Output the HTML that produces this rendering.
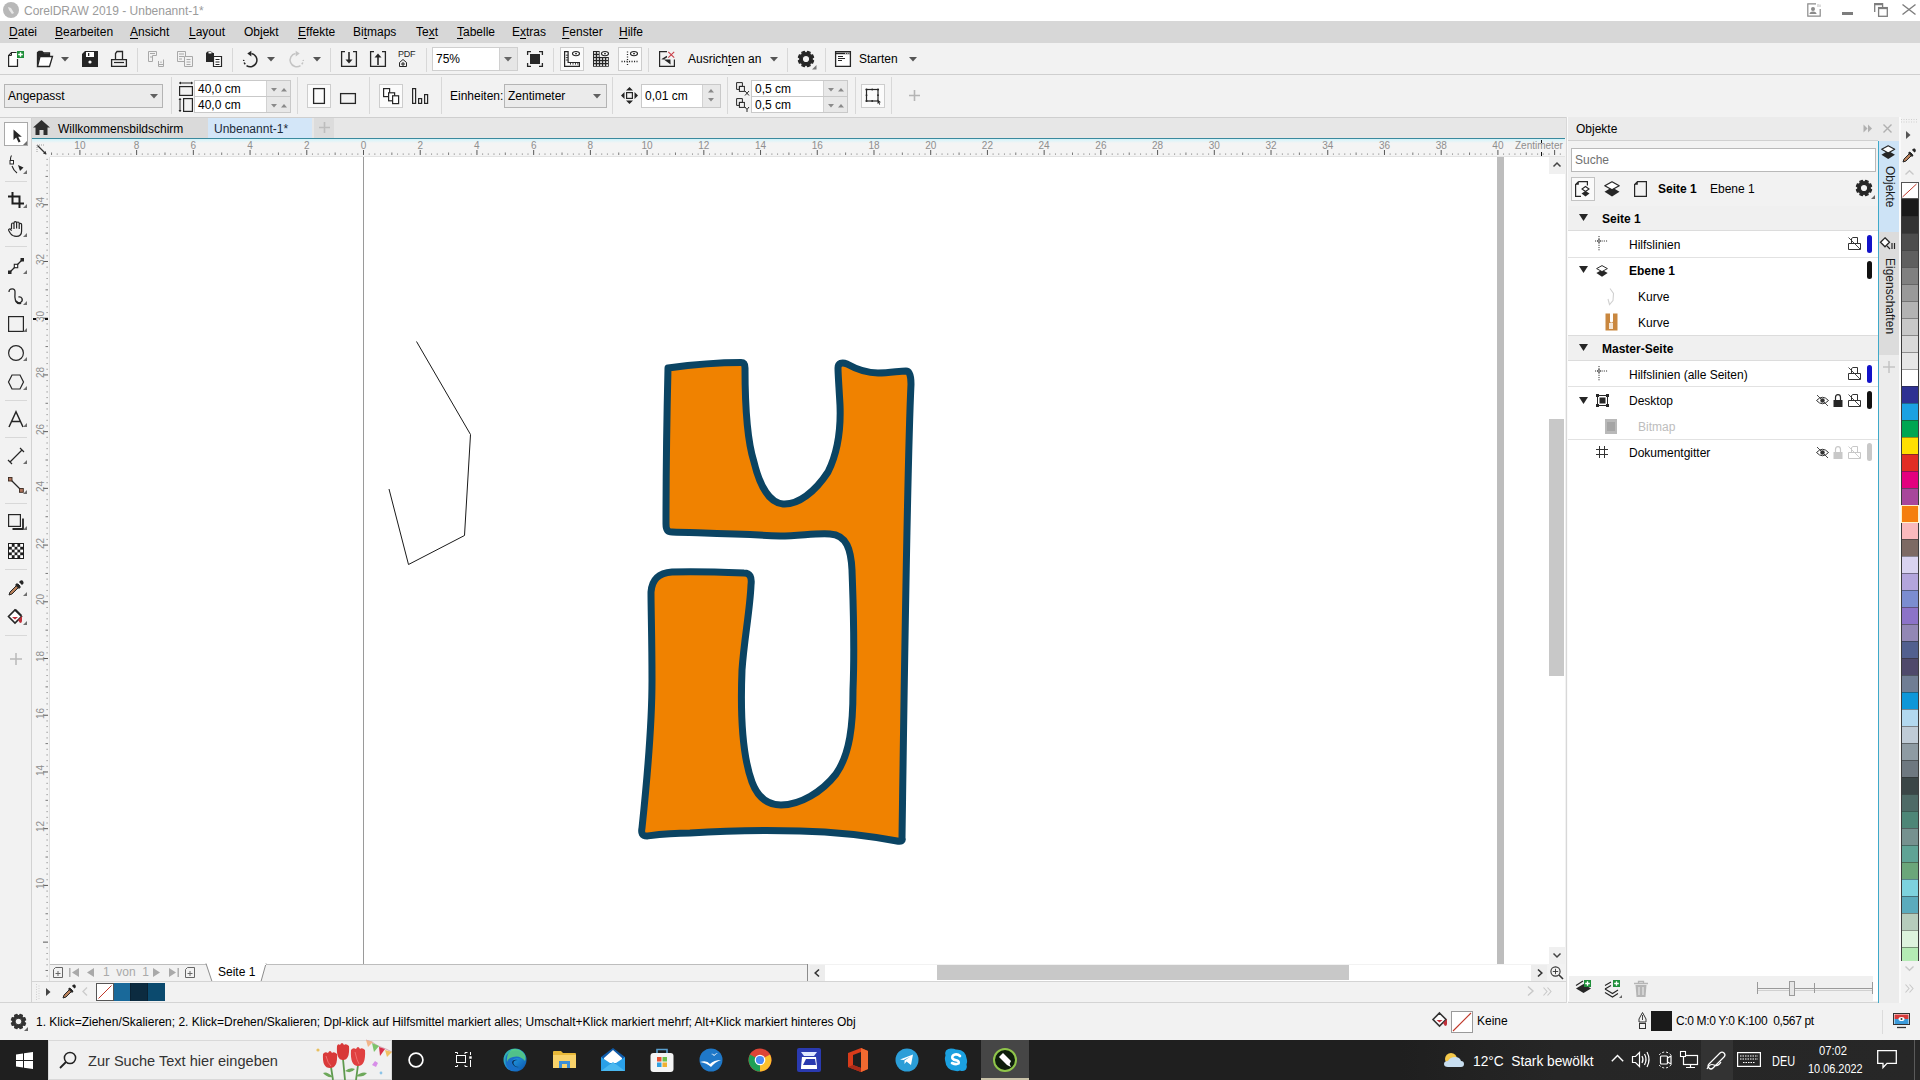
<!DOCTYPE html>
<html><head><meta charset="utf-8"><title>CorelDRAW</title>
<style>
*{margin:0;padding:0;box-sizing:border-box}
html,body{width:1920px;height:1080px;overflow:hidden}
body{position:relative;background:#f2f2f2;font-family:"Liberation Sans",sans-serif;font-size:12px;color:#000}
.a{position:absolute}
.t{position:absolute;white-space:nowrap;line-height:14px;height:14px}
svg{position:absolute;overflow:visible}
.u{text-decoration:underline;text-decoration-thickness:1px;text-underline-offset:2px}
</style></head><body>
<div class="a" style="left:0px;top:0px;width:1920px;height:21px;background:#fff"></div>
<div class="a" style="left:0px;top:21px;width:1920px;height:22px;background:#d7d7d7"></div>
<div class="a" style="left:0px;top:43px;width:1920px;height:32px;background:#f2f2f2;border-bottom:1px solid #cfcfcf"></div>
<div class="a" style="left:0px;top:75px;width:1920px;height:43px;background:#f2f2f2;border-bottom:1px solid #cfcfcf"></div>
<div class="a" style="left:0px;top:118px;width:31px;height:885px;background:#f2f2f2"></div>
<div class="a" style="left:31px;top:118px;width:1536px;height:20px;background:#e7e7e7"></div>
<div class="a" style="left:32px;top:118px;width:176px;height:20px;background:#dadada"></div>
<div class="a" style="left:208px;top:118px;width:104px;height:20px;background:#d3e6f8"></div>
<div class="a" style="left:314px;top:118px;width:20px;height:20px;background:#dcdcdc"></div>
<div class="a" style="left:32px;top:138px;width:1533px;height:1px;background:#3b8a9e"></div>
<div class="a" style="left:31px;top:140px;width:1534px;height:17px;background:#f4f4f4"></div>
<div class="a" style="left:31px;top:157px;width:19px;height:824px;background:#f4f4f4"></div>
<div class="a" style="left:50px;top:157px;width:1498px;height:807px;background:#fff"></div>
<div class="a" style="left:0px;top:1002px;width:1920px;height:38px;background:#f2f2f2;border-top:1px solid #d4d4d4"></div>
<div class="a" style="left:0px;top:1040px;width:1920px;height:40px;background:#202020"></div>
<div class="a" style="left:3px;top:2px;width:16px;height:16px;background:#b8b8b8;border-radius:50%"></div>
<svg style="left:6px;top:5px" width="10" height="10" viewBox="0 0 10 10"><path d="M2 2L5 3L8 8L6 9L3 5Z" fill="#e6e6e6"/></svg>
<div class="t" style="left:24px;top:4px;color:#9b9b9b">CorelDRAW 2019 - Unbenannt-1*</div>
<div class="t" style="left:9px;top:25px;color:#000"><span class="u">D</span>atei</div>
<div class="t" style="left:55px;top:25px;color:#000"><span class="u">B</span>earbeiten</div>
<div class="t" style="left:130px;top:25px;color:#000"><span class="u">A</span>nsicht</div>
<div class="t" style="left:189px;top:25px;color:#000"><span class="u">L</span>ayout</div>
<div class="t" style="left:244px;top:25px;color:#000">Ob<span class="u">j</span>ekt</div>
<div class="t" style="left:298px;top:25px;color:#000"><span class="u">E</span>ffekte</div>
<div class="t" style="left:353px;top:25px;color:#000">Bi<span class="u">t</span>maps</div>
<div class="t" style="left:416px;top:25px;color:#000">Te<span class="u">x</span>t</div>
<div class="t" style="left:457px;top:25px;color:#000"><span class="u">T</span>abelle</div>
<div class="t" style="left:512px;top:25px;color:#000">E<span class="u">x</span>tras</div>
<div class="t" style="left:562px;top:25px;color:#000"><span class="u">F</span>enster</div>
<div class="t" style="left:619px;top:25px;color:#000"><span class="u">H</span>ilfe</div>
<svg style="left:1807px;top:3px" width="15" height="14" viewBox="0 0 15 14"><path d="M9 0.8H0.8V13.2H13.2V6" fill="none" stroke="#8a8a8a" stroke-width="1.2"/><circle cx="6" cy="6" r="2" fill="#8a8a8a"/><path d="M2.5 11Q2.5 8.5 6 8.5Q9.5 8.5 9.5 11Z" fill="#8a8a8a"/><path d="M11 1V4M13 1.5V4" stroke="#aaa" stroke-width="0.8"/></svg>
<div class="a" style="left:1842px;top:12px;width:11px;height:3px;background:#7d7d7d"></div>
<svg style="left:1874px;top:3px" width="14" height="14" viewBox="0 0 14 14"><path d="M0.7 9V0.7H8.6V4" fill="none" stroke="#7d7d7d" stroke-width="1.3"/><path d="M0.7 1.5H8.6" stroke="#7d7d7d" stroke-width="1.5"/><rect x="4.6" y="4.6" width="8.7" height="8.7" fill="#fff" stroke="#7d7d7d" stroke-width="1.3"/><path d="M4.6 5.4H13.3" stroke="#7d7d7d" stroke-width="1.5"/></svg>
<svg style="left:1902px;top:4px" width="14" height="11" viewBox="0 0 14 11"><path d="M0.5 0.5L13.5 10.5M13.5 0.5L0.5 10.5" stroke="#7d7d7d" stroke-width="1.4"/></svg>
<svg style="left:8px;top:51px;" width="17" height="16" viewBox="0 0 17 16"><path d="M8.5 1.5H3.5L0.6 4.5V15.4H9.5V8" fill="#fff" stroke="#262626" stroke-width="1.2"/><path d="M0.5 4.5H3.5V1.5" fill="none" stroke="#262626" stroke-width="1"/><rect x="9" y="0" width="7" height="7" fill="#1f8f3a"/><path d="M12.5 1.2V5.8M10.2 3.5H14.8" stroke="#fff" stroke-width="1.4"/></svg>
<svg style="left:37px;top:51px;" width="16" height="16" viewBox="0 0 16 16"><path d="M0.5 15.5V1.5L2 0.5H5L6.5 2H12.5V5" fill="none" stroke="#262626" stroke-width="1.3"/><path d="M0 1H6L7 2.5H13V5H3L0 15.5Z" fill="#262626"/><path d="M3 5.5H15.5L12.5 15.5H0.5Z" fill="#fff" stroke="#262626" stroke-width="1.3"/></svg>
<svg style="left:61px;top:57px;" width="8" height="5" viewBox="0 0 8 5"><path d="M0 0H8L4 4.5Z" fill="#555"/></svg>
<svg style="left:82px;top:51px;" width="16" height="16" viewBox="0 0 16 16"><path d="M0 3L3 0H16V16H0Z" fill="#262626"/><rect x="4" y="1" width="8" height="5" fill="#fff"/><rect x="6" y="2" width="1.3" height="3" fill="#262626"/><circle cx="8" cy="11" r="1.6" fill="#fff"/></svg>
<svg style="left:111px;top:51px;" width="16" height="16" viewBox="0 0 16 16"><path d="M4.5 8.5V2.5L6 0.5H11.5V8.5" fill="none" stroke="#262626" stroke-width="1.3"/><path d="M0.6 8.6H15.4V15.4H0.6Z" fill="none" stroke="#262626" stroke-width="1.3"/><path d="M3 11.5H13" stroke="#262626" stroke-width="1.2"/></svg>
<div class="a" style="left:137px;top:48px;width:1px;height:24px;background:#d8d8d8"></div>
<svg style="left:148px;top:51px;" width="16" height="16" viewBox="0 0 16 16"><path d="M0.5 0.5H8.5V4.5H4.5V10.5H0.5Z" fill="none" stroke="#a8a8a8"/><path d="M2 2.5H7M2 6H4" stroke="#a8a8a8"/><path d="M10.5 10V15.5H15.5V8.5" fill="none" stroke="#a8a8a8"/><path d="M11 13.5H15M13 10.5V12" stroke="#a8a8a8"/></svg>
<svg style="left:177px;top:51px;" width="16" height="16" viewBox="0 0 16 16"><path d="M0.5 0.5H8.5V10.5H0.5Z" fill="none" stroke="#a8a8a8"/><path d="M2 3H7M2 5.5H7M2 8H5" stroke="#a8a8a8"/><path d="M7.5 5.5H15.5V15.5H7.5Z" fill="#f2f2f2" stroke="#a8a8a8"/><path d="M9.5 8.5H13.5M9.5 11H13.5M9.5 13.5H13.5" stroke="#a8a8a8"/></svg>
<svg style="left:206px;top:51px;" width="16" height="16" viewBox="0 0 16 16"><path d="M0 2L1.5 0.5H5L7 2H8V11H0Z" fill="#262626"/><rect x="2.5" y="1" width="3" height="1.5" fill="#fff"/><path d="M7.5 5.5H15.5V15.5H7.5Z" fill="#fff" stroke="#262626" stroke-width="1.2"/><path d="M9.5 8.5H13.5M9.5 11H13.5M9.5 13.5H13.5" stroke="#262626" stroke-width="1.1"/></svg>
<div class="a" style="left:232px;top:48px;width:1px;height:24px;background:#d8d8d8"></div>
<svg style="left:243px;top:51px;" width="16" height="16" viewBox="0 0 16 16"><path d="M8.45 2.60A6.6 6.6 0 1 1 3.51 14.51M2.24 13.34A6.6 6.6 0 0 1 1.18 11.57M0.76 10.02A6.6 6.6 0 0 1 0.70 8.87" fill="none" stroke="#262626" stroke-width="1.5"/><path d="M4.3 2.6L8.3 -0.2V5.6Z" fill="#262626"/></svg>
<svg style="left:267px;top:57px;" width="8" height="5" viewBox="0 0 8 5"><path d="M0 0H8L4 4.5Z" fill="#555"/></svg>
<svg style="left:288px;top:51px;" width="16" height="16" viewBox="0 0 16 16"><path d="M7.55 2.60A6.6 6.6 0 1 0 12.49 14.51M13.76 13.34A6.6 6.6 0 0 0 14.82 11.57M15.24 10.02A6.6 6.6 0 0 0 15.30 8.87" fill="none" stroke="#c4c4c4" stroke-width="1.5"/><path d="M11.7 2.6L7.7 -0.2V5.6Z" fill="#c4c4c4"/></svg>
<svg style="left:313px;top:57px;" width="8" height="5" viewBox="0 0 8 5"><path d="M0 0H8L4 4.5Z" fill="#555"/></svg>
<div class="a" style="left:330px;top:48px;width:1px;height:24px;background:#d8d8d8"></div>
<svg style="left:341px;top:51px;" width="16" height="16" viewBox="0 0 16 16"><path d="M4 0.6H0.6V15.4H15.4V0.6H12" fill="none" stroke="#262626" stroke-width="1.3"/><path d="M8 1V10" stroke="#262626" stroke-width="1.6"/><path d="M4.5 8.5H11.5L8 12.5Z" fill="#262626"/></svg>
<svg style="left:370px;top:51px;" width="16" height="16" viewBox="0 0 16 16"><path d="M4 0.6H0.6V15.4H15.4V0.6H12" fill="none" stroke="#262626" stroke-width="1.3"/><path d="M8 5V14" stroke="#262626" stroke-width="1.6"/><path d="M4.5 6.5H11.5L8 2.5Z" fill="#262626"/></svg>
<div class="a" style="left:398px;top:50px;font-size:9px;line-height:9px;color:#262626;letter-spacing:-0.2px">PDF</div>
<svg style="left:399px;top:59px;" width="8" height="8" viewBox="0 0 8 8"><path d="M0.5 3.5L4 0.5L7.5 3.5V7.5H0.5Z" fill="none" stroke="#262626" stroke-width="1"/><path d="M2 5H6M4 3V7" stroke="#262626" stroke-width="1"/></svg>
<div class="a" style="left:426px;top:48px;width:1px;height:24px;background:#d8d8d8"></div>
<div class="a" style="left:432px;top:47px;width:86px;height:24px;background:#fff;border:1px solid #cfcfcf"></div>
<div class="a" style="left:499px;top:48px;width:18px;height:22px;background:#e6e6e6;border-left:1px solid #d0d0d0"></div>
<svg style="left:504px;top:57px;" width="8" height="5" viewBox="0 0 8 5"><path d="M0 0H8L4 4.5Z" fill="#666"/></svg>
<div class="t" style="left:436px;top:52px;">75%</div>
<svg style="left:527px;top:51px;" width="16" height="16" viewBox="0 0 16 16"><path d="M0.6 4V0.6H4M12 0.6H15.4V4M15.4 12V15.4H12M4 15.4H0.6V12" fill="none" stroke="#262626" stroke-width="1.3"/><rect x="3" y="3" width="10" height="10" fill="#262626"/></svg>
<div class="a" style="left:553px;top:48px;width:1px;height:24px;background:#d8d8d8"></div>
<div class="a" style="left:560px;top:47px;width:24px;height:24px;background:#fbfbfb;border:1px solid #cdcdcd"></div>
<svg style="left:564px;top:51px;" width="16" height="16" viewBox="0 0 16 16"><path d="M0.6 0.6H4.1V11.5H15.4V15.4H0.6Z" fill="none" stroke="#262626" stroke-width="1.2"/><path d="M1.8 4.2H4M1.8 6.6H4M1.8 9H4M6.5 11.6V13.6M9 11.6V13.6M11.5 11.6V13.6M13.8 11.6V13.6" stroke="#262626" stroke-width="0.9"/><ellipse cx="12" cy="2.6" rx="3.5" ry="2.1" fill="#fff" stroke="#262626" stroke-width="1.1"/><circle cx="12" cy="2.6" r="0.95" fill="#262626"/></svg>
<svg style="left:593px;top:51px;" width="16" height="16" viewBox="0 0 16 16"><path d="M0 0H6.6V6.1H15.8V15.8H0Z" fill="#262626"/><rect x="1.05" y="1.05" width="1.75" height="1.75" fill="#f2f2f2"/><rect x="1.05" y="4.10" width="1.75" height="1.75" fill="#f2f2f2"/><rect x="1.05" y="7.15" width="1.75" height="1.75" fill="#f2f2f2"/><rect x="1.05" y="10.20" width="1.75" height="1.75" fill="#f2f2f2"/><rect x="1.05" y="13.25" width="1.75" height="1.75" fill="#f2f2f2"/><rect x="4.10" y="1.05" width="1.75" height="1.75" fill="#f2f2f2"/><rect x="4.10" y="4.10" width="1.75" height="1.75" fill="#f2f2f2"/><rect x="4.10" y="7.15" width="1.75" height="1.75" fill="#f2f2f2"/><rect x="4.10" y="10.20" width="1.75" height="1.75" fill="#f2f2f2"/><rect x="4.10" y="13.25" width="1.75" height="1.75" fill="#f2f2f2"/><rect x="7.15" y="7.15" width="1.75" height="1.75" fill="#f2f2f2"/><rect x="7.15" y="10.20" width="1.75" height="1.75" fill="#f2f2f2"/><rect x="7.15" y="13.25" width="1.75" height="1.75" fill="#f2f2f2"/><rect x="10.20" y="7.15" width="1.75" height="1.75" fill="#f2f2f2"/><rect x="10.20" y="10.20" width="1.75" height="1.75" fill="#f2f2f2"/><rect x="10.20" y="13.25" width="1.75" height="1.75" fill="#f2f2f2"/><rect x="13.25" y="7.15" width="1.75" height="1.75" fill="#f2f2f2"/><rect x="13.25" y="10.20" width="1.75" height="1.75" fill="#f2f2f2"/><rect x="13.25" y="13.25" width="1.75" height="1.75" fill="#f2f2f2"/><ellipse cx="12" cy="2.6" rx="3.5" ry="2.1" fill="#fff" stroke="#262626" stroke-width="1.1"/><circle cx="12" cy="2.6" r="0.95" fill="#262626"/></svg>
<div class="a" style="left:618px;top:47px;width:24px;height:24px;background:#fbfbfb;border:1px solid #cdcdcd"></div>
<svg style="left:621px;top:51px;" width="17" height="16" viewBox="0 0 17 16"><path d="M6.5 0.5V15.5M0.5 10.5H16.5" stroke="#262626" stroke-width="1.3" stroke-dasharray="1.1 1.4"/><ellipse cx="13" cy="2.6" rx="3.5" ry="2.1" fill="#fff" stroke="#262626" stroke-width="1.1"/><circle cx="13" cy="2.6" r="0.95" fill="#262626"/></svg>
<div class="a" style="left:648px;top:48px;width:1px;height:24px;background:#d8d8d8"></div>
<svg style="left:659px;top:51px;" width="17" height="16" viewBox="0 0 17 16"><path d="M8 0.6H0.6V15.4H15.4V8.5" fill="none" stroke="#262626" stroke-width="1.2"/><path d="M9.3 0.8L15.2 6.6M15.2 0.8L9.3 6.6" stroke="#c8404a" stroke-width="1.1"/><path d="M2.2 8.3L7.8 4.8L8.2 6.3L4.8 8.4L11.6 13.4L11.4 8.5H8.5Z" fill="#262626"/></svg>
<div class="t" style="left:688px;top:52px;">Ausrich<span class="u">t</span>en an</div>
<svg style="left:770px;top:57px;" width="8" height="5" viewBox="0 0 8 5"><path d="M0 0H8L4 4.5Z" fill="#555"/></svg>
<div class="a" style="left:787px;top:48px;width:1px;height:24px;background:#d8d8d8"></div>
<svg style="left:797px;top:50px;" width="20" height="20" viewBox="0 0 20 20"><path d="M15.15 9.81 L16.62 10.69 L15.58 13.19 L13.92 12.77 L12.77 13.92 L13.19 15.58 L10.69 16.62 L9.81 15.15 L8.19 15.15 L7.31 16.62 L4.81 15.58 L5.23 13.92 L4.08 12.77 L2.42 13.19 L1.38 10.69 L2.85 9.81 L2.85 8.19 L1.38 7.31 L2.42 4.81 L4.08 5.23 L5.23 4.08 L4.81 2.42 L7.31 1.38 L8.19 2.85 L9.81 2.85 L10.69 1.38 L13.19 2.42 L12.77 4.08 L13.92 5.23 L15.58 4.81 L16.62 7.31 L15.15 8.19Z M12.70 9.00 A3.7 3.7 0 1 0 5.30 9.00 A3.7 3.7 0 1 0 12.70 9.00Z" fill="#262626" stroke="#262626" stroke-width="1.2" stroke-linejoin="round" fill-rule="evenodd"/><path d="M19.5 15V19.5H15Z" fill="#777"/></svg>
<div class="a" style="left:825px;top:48px;width:1px;height:24px;background:#d8d8d8"></div>
<svg style="left:835px;top:51px;" width="17" height="16" viewBox="0 0 17 16"><path d="M0.6 0.6H15.4V15.4H0.6Z" fill="#fff" stroke="#262626" stroke-width="1.3"/><path d="M0.6 2.4H15.4" stroke="#262626" stroke-width="1.6"/><path d="M10 2.4H15" stroke="#fff" stroke-width="0.8" stroke-dasharray="1 0.8"/><path d="M3 5.5H8M3 7.5H10M3 9.5H7" stroke="#262626" stroke-width="1"/></svg>
<div class="t" style="left:859px;top:52px;">Starten</div>
<svg style="left:909px;top:57px;" width="8" height="5" viewBox="0 0 8 5"><path d="M0 0H8L4 4.5Z" fill="#555"/></svg>
<div class="a" style="left:4px;top:84px;width:159px;height:24px;background:#ebebeb;border:1px solid #b4b4b4"></div>
<div class="t" style="left:8px;top:89px;">Angepasst</div>
<svg style="left:150px;top:94px;" width="8" height="5" viewBox="0 0 8 5"><path d="M0 0H8L4 4.5Z" fill="#606060"/></svg>
<div class="a" style="left:171px;top:77px;width:1px;height:37px;background:#d8d8d8"></div>
<svg style="left:179px;top:82px;" width="14" height="14" viewBox="0 0 14 14"><path d="M0.5 1H13.5" stroke="#262626" stroke-width="1"/><path d="M0 1L2 -0.5V2.5Z M14 1L12 -0.5V2.5Z" fill="#262626"/><rect x="0.6" y="4.6" width="12.8" height="8.8" fill="none" stroke="#262626" stroke-width="1.2"/></svg>
<svg style="left:179px;top:98px;" width="14" height="14" viewBox="0 0 14 14"><path d="M1 0.5V13.5" stroke="#262626" stroke-width="1"/><path d="M1 0L-0.5 2H2.5Z M1 14L-0.5 12H2.5Z" fill="#262626"/><rect x="4.6" y="0.6" width="8.8" height="12.8" fill="none" stroke="#262626" stroke-width="1.2"/></svg>
<div class="a" style="left:194px;top:80px;width:97px;height:17px;background:#fff;border:1px solid #c9c9c9"></div>
<div class="a" style="left:266px;top:81px;width:24px;height:15px;background:#e8e8e8;border-left:1px solid #d2d2d2"></div>
<div class="a" style="left:194px;top:96px;width:97px;height:17px;background:#fff;border:1px solid #c9c9c9"></div>
<div class="a" style="left:266px;top:97px;width:24px;height:15px;background:#e8e8e8;border-left:1px solid #d2d2d2"></div>
<svg style="left:271px;top:88px;" width="6" height="4" viewBox="0 0 6 4"><path d="M0 0H6L3 3.5Z" fill="#8a8a8a"/></svg>
<svg style="left:281px;top:88px;" width="6" height="4" viewBox="0 0 6 4"><path d="M0 3.5H6L3 0Z" fill="#8a8a8a"/></svg>
<svg style="left:271px;top:104px;" width="6" height="4" viewBox="0 0 6 4"><path d="M0 0H6L3 3.5Z" fill="#8a8a8a"/></svg>
<svg style="left:281px;top:104px;" width="6" height="4" viewBox="0 0 6 4"><path d="M0 3.5H6L3 0Z" fill="#8a8a8a"/></svg>
<div class="t" style="left:198px;top:82px;">40,0 cm</div>
<div class="t" style="left:198px;top:98px;">40,0 cm</div>
<div class="a" style="left:297px;top:77px;width:1px;height:37px;background:#d8d8d8"></div>
<div class="a" style="left:307px;top:84px;width:24px;height:24px;background:#fbfbfb;border:1px solid #cdcdcd"></div>
<svg style="left:313px;top:88px;" width="12" height="16" viewBox="0 0 12 16"><rect x="0.6" y="0.6" width="10.8" height="14.8" fill="none" stroke="#262626" stroke-width="1.3"/></svg>
<svg style="left:340px;top:93px;" width="16" height="11" viewBox="0 0 16 11"><rect x="0.6" y="0.6" width="14.8" height="9.8" fill="none" stroke="#262626" stroke-width="1.3"/></svg>
<div class="a" style="left:369px;top:77px;width:1px;height:37px;background:#d8d8d8"></div>
<div class="a" style="left:379px;top:84px;width:24px;height:24px;background:#fbfbfb;border:1px solid #cdcdcd"></div>
<svg style="left:383px;top:88px;" width="16" height="16" viewBox="0 0 16 16"><rect x="0.6" y="0.6" width="6" height="8" fill="#fff" stroke="#262626" stroke-width="1.2"/><rect x="5.6" y="4.8" width="6" height="8" fill="#fff" stroke="#262626" stroke-width="1.2"/><rect x="9.6" y="7.8" width="6" height="7.8" fill="#fff" stroke="#262626" stroke-width="1.2"/></svg>
<svg style="left:412px;top:88px;" width="16" height="16" viewBox="0 0 16 16"><rect x="0.6" y="0.6" width="3" height="14.8" fill="none" stroke="#262626" stroke-width="1.2"/><rect x="6.6" y="10.6" width="3" height="4.8" fill="none" stroke="#262626" stroke-width="1.2"/><rect x="12.6" y="6.6" width="3" height="8.8" fill="none" stroke="#262626" stroke-width="1.2"/></svg>
<div class="a" style="left:441px;top:77px;width:1px;height:37px;background:#d8d8d8"></div>
<div class="t" style="left:450px;top:89px;">Einheiten:</div>
<div class="a" style="left:504px;top:84px;width:103px;height:24px;background:#ebebeb;border:1px solid #b4b4b4"></div>
<div class="t" style="left:508px;top:89px;">Zentimeter</div>
<svg style="left:593px;top:94px;" width="8" height="5" viewBox="0 0 8 5"><path d="M0 0H8L4 4.5Z" fill="#606060"/></svg>
<div class="a" style="left:612px;top:77px;width:1px;height:37px;background:#d8d8d8"></div>
<svg style="left:621px;top:87px;" width="17" height="17" viewBox="0 0 17 17"><path d="M8.5 0L12 3.5H5Z M8.5 17L12 13.5H5Z M0 8.5L3.5 5V12Z M17 8.5L13.5 5V12Z" fill="#262626"/><rect x="5.6" y="5.6" width="5.8" height="5.8" fill="none" stroke="#262626" stroke-width="1.2"/></svg>
<div class="a" style="left:641px;top:84px;width:80px;height:24px;background:#fff;border:1px solid #c9c9c9"></div>
<div class="a" style="left:702px;top:85px;width:18px;height:22px;background:#e8e8e8;border-left:1px solid #d2d2d2"></div>
<svg style="left:708px;top:89px;" width="6" height="4" viewBox="0 0 6 4"><path d="M0 3.5H6L3 0Z" fill="#8a8a8a"/></svg>
<svg style="left:708px;top:98px;" width="6" height="4" viewBox="0 0 6 4"><path d="M0 0H6L3 3.5Z" fill="#8a8a8a"/></svg>
<div class="t" style="left:645px;top:89px;">0,01 cm</div>
<div class="a" style="left:727px;top:77px;width:1px;height:37px;background:#d8d8d8"></div>
<svg style="left:736px;top:82px;" width="14" height="14" viewBox="0 0 14 14"><path d="M0.6 0.6H6.4V4.4H3.4V7.4H0.6Z" fill="none" stroke="#262626" stroke-width="1"/><rect x="3.4" y="4.4" width="5" height="5" fill="none" stroke="#262626" stroke-width="1"/><path d="M9 9L13 13.5M13 9L9 13.5" stroke="#262626" stroke-width="1"/></svg>
<svg style="left:736px;top:98px;" width="14" height="14" viewBox="0 0 14 14"><path d="M0.6 0.6H6.4V4.4H3.4V7.4H0.6Z" fill="none" stroke="#262626" stroke-width="1"/><rect x="3.4" y="4.4" width="5" height="5" fill="none" stroke="#262626" stroke-width="1"/><path d="M9 9L11 11.5L13 9M11 11.5V14" fill="none" stroke="#262626" stroke-width="1"/></svg>
<div class="a" style="left:751px;top:80px;width:97px;height:17px;background:#fff;border:1px solid #c9c9c9"></div>
<div class="a" style="left:823px;top:81px;width:24px;height:15px;background:#e8e8e8;border-left:1px solid #d2d2d2"></div>
<div class="a" style="left:751px;top:96px;width:97px;height:17px;background:#fff;border:1px solid #c9c9c9"></div>
<div class="a" style="left:823px;top:97px;width:24px;height:15px;background:#e8e8e8;border-left:1px solid #d2d2d2"></div>
<svg style="left:828px;top:88px;" width="6" height="4" viewBox="0 0 6 4"><path d="M0 0H6L3 3.5Z" fill="#8a8a8a"/></svg>
<svg style="left:838px;top:88px;" width="6" height="4" viewBox="0 0 6 4"><path d="M0 3.5H6L3 0Z" fill="#8a8a8a"/></svg>
<svg style="left:828px;top:104px;" width="6" height="4" viewBox="0 0 6 4"><path d="M0 0H6L3 3.5Z" fill="#8a8a8a"/></svg>
<svg style="left:838px;top:104px;" width="6" height="4" viewBox="0 0 6 4"><path d="M0 3.5H6L3 0Z" fill="#8a8a8a"/></svg>
<div class="t" style="left:755px;top:82px;">0,5 cm</div>
<div class="t" style="left:755px;top:98px;">0,5 cm</div>
<div class="a" style="left:855px;top:77px;width:1px;height:37px;background:#d8d8d8"></div>
<div class="a" style="left:861px;top:84px;width:24px;height:24px;background:#fbfbfb;border:1px solid #cdcdcd"></div>
<svg style="left:865px;top:88px;" width="17" height="17" viewBox="0 0 17 17"><rect x="1.5" y="1.5" width="11.5" height="11.5" fill="none" stroke="#262626" stroke-width="1.2"/><g fill="#262626"><circle cx="1.5" cy="1.5" r="1.1"/><circle cx="13" cy="1.5" r="1.1"/><circle cx="1.5" cy="13" r="1.1"/><circle cx="7.2" cy="1.5" r="0.9"/><circle cx="7.2" cy="13" r="0.9"/><circle cx="1.5" cy="7.2" r="0.9"/><circle cx="13" cy="7.2" r="0.9"/></g><path d="M12.5 11.5L16 14.2L14.3 14.6L15.2 16.5L14.4 16.8L13.5 15L12.5 16Z" fill="#262626"/></svg>
<div class="a" style="left:891px;top:77px;width:1px;height:37px;background:#d8d8d8"></div>
<svg style="left:909px;top:90px;" width="11" height="11" viewBox="0 0 11 11"><path d="M5.5 0V11M0 5.5H11" stroke="#b5b5b5" stroke-width="1.6"/></svg>
<svg style="left:33px;top:120px;" width="17" height="15" viewBox="0 0 17 15"><path d="M8.5 0L17 7.5H14.5V15H10.5V10H6.5V15H2.5V7.5H0Z" fill="#2f2f2f"/></svg>
<div class="t" style="left:58px;top:122px;">Willkommensbildschirm</div>
<div class="t" style="left:214px;top:122px;color:#1b2a3a">Unbenannt-1*</div>
<svg style="left:319px;top:122px;" width="11" height="11" viewBox="0 0 11 11"><path d="M5.5 0V11M0 5.5H11" stroke="#bdbdbd" stroke-width="1.6"/></svg>
<div class="a" style="left:31px;top:139px;width:1534px;height:4px;background:linear-gradient(#d2f4fb,#f4f4f4)"></div>
<svg style="left:0;top:0" width="1920" height="1080" viewBox="0 0 1920 1080"><rect x="51.04" y="152.5" width="1" height="2.5" fill="#7a7a7a"/><rect x="56.71" y="153.5" width="1" height="1.2" fill="#8a8a8a"/><rect x="62.38" y="153.5" width="1" height="1.2" fill="#8a8a8a"/><rect x="68.06" y="153.5" width="1" height="1.2" fill="#8a8a8a"/><rect x="73.73" y="153.5" width="1" height="1.2" fill="#8a8a8a"/><rect x="79.40" y="150" width="1" height="5" fill="#585858"/><rect x="85.07" y="153.5" width="1" height="1.2" fill="#8a8a8a"/><rect x="90.74" y="153.5" width="1" height="1.2" fill="#8a8a8a"/><rect x="96.42" y="153.5" width="1" height="1.2" fill="#8a8a8a"/><rect x="102.09" y="153.5" width="1" height="1.2" fill="#8a8a8a"/><rect x="107.76" y="152.5" width="1" height="2.5" fill="#7a7a7a"/><rect x="113.43" y="153.5" width="1" height="1.2" fill="#8a8a8a"/><rect x="119.10" y="153.5" width="1" height="1.2" fill="#8a8a8a"/><rect x="124.78" y="153.5" width="1" height="1.2" fill="#8a8a8a"/><rect x="130.45" y="153.5" width="1" height="1.2" fill="#8a8a8a"/><rect x="136.12" y="150" width="1" height="5" fill="#585858"/><rect x="141.79" y="153.5" width="1" height="1.2" fill="#8a8a8a"/><rect x="147.46" y="153.5" width="1" height="1.2" fill="#8a8a8a"/><rect x="153.14" y="153.5" width="1" height="1.2" fill="#8a8a8a"/><rect x="158.81" y="153.5" width="1" height="1.2" fill="#8a8a8a"/><rect x="164.48" y="152.5" width="1" height="2.5" fill="#7a7a7a"/><rect x="170.15" y="153.5" width="1" height="1.2" fill="#8a8a8a"/><rect x="175.82" y="153.5" width="1" height="1.2" fill="#8a8a8a"/><rect x="181.50" y="153.5" width="1" height="1.2" fill="#8a8a8a"/><rect x="187.17" y="153.5" width="1" height="1.2" fill="#8a8a8a"/><rect x="192.84" y="150" width="1" height="5" fill="#585858"/><rect x="198.51" y="153.5" width="1" height="1.2" fill="#8a8a8a"/><rect x="204.18" y="153.5" width="1" height="1.2" fill="#8a8a8a"/><rect x="209.86" y="153.5" width="1" height="1.2" fill="#8a8a8a"/><rect x="215.53" y="153.5" width="1" height="1.2" fill="#8a8a8a"/><rect x="221.20" y="152.5" width="1" height="2.5" fill="#7a7a7a"/><rect x="226.87" y="153.5" width="1" height="1.2" fill="#8a8a8a"/><rect x="232.54" y="153.5" width="1" height="1.2" fill="#8a8a8a"/><rect x="238.22" y="153.5" width="1" height="1.2" fill="#8a8a8a"/><rect x="243.89" y="153.5" width="1" height="1.2" fill="#8a8a8a"/><rect x="249.56" y="150" width="1" height="5" fill="#585858"/><rect x="255.23" y="153.5" width="1" height="1.2" fill="#8a8a8a"/><rect x="260.90" y="153.5" width="1" height="1.2" fill="#8a8a8a"/><rect x="266.58" y="153.5" width="1" height="1.2" fill="#8a8a8a"/><rect x="272.25" y="153.5" width="1" height="1.2" fill="#8a8a8a"/><rect x="277.92" y="152.5" width="1" height="2.5" fill="#7a7a7a"/><rect x="283.59" y="153.5" width="1" height="1.2" fill="#8a8a8a"/><rect x="289.26" y="153.5" width="1" height="1.2" fill="#8a8a8a"/><rect x="294.94" y="153.5" width="1" height="1.2" fill="#8a8a8a"/><rect x="300.61" y="153.5" width="1" height="1.2" fill="#8a8a8a"/><rect x="306.28" y="150" width="1" height="5" fill="#585858"/><rect x="311.95" y="153.5" width="1" height="1.2" fill="#8a8a8a"/><rect x="317.62" y="153.5" width="1" height="1.2" fill="#8a8a8a"/><rect x="323.30" y="153.5" width="1" height="1.2" fill="#8a8a8a"/><rect x="328.97" y="153.5" width="1" height="1.2" fill="#8a8a8a"/><rect x="334.64" y="152.5" width="1" height="2.5" fill="#7a7a7a"/><rect x="340.31" y="153.5" width="1" height="1.2" fill="#8a8a8a"/><rect x="345.98" y="153.5" width="1" height="1.2" fill="#8a8a8a"/><rect x="351.66" y="153.5" width="1" height="1.2" fill="#8a8a8a"/><rect x="357.33" y="153.5" width="1" height="1.2" fill="#8a8a8a"/><rect x="363.00" y="150" width="1" height="5" fill="#585858"/><rect x="368.67" y="153.5" width="1" height="1.2" fill="#8a8a8a"/><rect x="374.34" y="153.5" width="1" height="1.2" fill="#8a8a8a"/><rect x="380.02" y="153.5" width="1" height="1.2" fill="#8a8a8a"/><rect x="385.69" y="153.5" width="1" height="1.2" fill="#8a8a8a"/><rect x="391.36" y="152.5" width="1" height="2.5" fill="#7a7a7a"/><rect x="397.03" y="153.5" width="1" height="1.2" fill="#8a8a8a"/><rect x="402.70" y="153.5" width="1" height="1.2" fill="#8a8a8a"/><rect x="408.38" y="153.5" width="1" height="1.2" fill="#8a8a8a"/><rect x="414.05" y="153.5" width="1" height="1.2" fill="#8a8a8a"/><rect x="419.72" y="150" width="1" height="5" fill="#585858"/><rect x="425.39" y="153.5" width="1" height="1.2" fill="#8a8a8a"/><rect x="431.06" y="153.5" width="1" height="1.2" fill="#8a8a8a"/><rect x="436.74" y="153.5" width="1" height="1.2" fill="#8a8a8a"/><rect x="442.41" y="153.5" width="1" height="1.2" fill="#8a8a8a"/><rect x="448.08" y="152.5" width="1" height="2.5" fill="#7a7a7a"/><rect x="453.75" y="153.5" width="1" height="1.2" fill="#8a8a8a"/><rect x="459.42" y="153.5" width="1" height="1.2" fill="#8a8a8a"/><rect x="465.10" y="153.5" width="1" height="1.2" fill="#8a8a8a"/><rect x="470.77" y="153.5" width="1" height="1.2" fill="#8a8a8a"/><rect x="476.44" y="150" width="1" height="5" fill="#585858"/><rect x="482.11" y="153.5" width="1" height="1.2" fill="#8a8a8a"/><rect x="487.78" y="153.5" width="1" height="1.2" fill="#8a8a8a"/><rect x="493.46" y="153.5" width="1" height="1.2" fill="#8a8a8a"/><rect x="499.13" y="153.5" width="1" height="1.2" fill="#8a8a8a"/><rect x="504.80" y="152.5" width="1" height="2.5" fill="#7a7a7a"/><rect x="510.47" y="153.5" width="1" height="1.2" fill="#8a8a8a"/><rect x="516.14" y="153.5" width="1" height="1.2" fill="#8a8a8a"/><rect x="521.82" y="153.5" width="1" height="1.2" fill="#8a8a8a"/><rect x="527.49" y="153.5" width="1" height="1.2" fill="#8a8a8a"/><rect x="533.16" y="150" width="1" height="5" fill="#585858"/><rect x="538.83" y="153.5" width="1" height="1.2" fill="#8a8a8a"/><rect x="544.50" y="153.5" width="1" height="1.2" fill="#8a8a8a"/><rect x="550.18" y="153.5" width="1" height="1.2" fill="#8a8a8a"/><rect x="555.85" y="153.5" width="1" height="1.2" fill="#8a8a8a"/><rect x="561.52" y="152.5" width="1" height="2.5" fill="#7a7a7a"/><rect x="567.19" y="153.5" width="1" height="1.2" fill="#8a8a8a"/><rect x="572.86" y="153.5" width="1" height="1.2" fill="#8a8a8a"/><rect x="578.54" y="153.5" width="1" height="1.2" fill="#8a8a8a"/><rect x="584.21" y="153.5" width="1" height="1.2" fill="#8a8a8a"/><rect x="589.88" y="150" width="1" height="5" fill="#585858"/><rect x="595.55" y="153.5" width="1" height="1.2" fill="#8a8a8a"/><rect x="601.22" y="153.5" width="1" height="1.2" fill="#8a8a8a"/><rect x="606.90" y="153.5" width="1" height="1.2" fill="#8a8a8a"/><rect x="612.57" y="153.5" width="1" height="1.2" fill="#8a8a8a"/><rect x="618.24" y="152.5" width="1" height="2.5" fill="#7a7a7a"/><rect x="623.91" y="153.5" width="1" height="1.2" fill="#8a8a8a"/><rect x="629.58" y="153.5" width="1" height="1.2" fill="#8a8a8a"/><rect x="635.26" y="153.5" width="1" height="1.2" fill="#8a8a8a"/><rect x="640.93" y="153.5" width="1" height="1.2" fill="#8a8a8a"/><rect x="646.60" y="150" width="1" height="5" fill="#585858"/><rect x="652.27" y="153.5" width="1" height="1.2" fill="#8a8a8a"/><rect x="657.94" y="153.5" width="1" height="1.2" fill="#8a8a8a"/><rect x="663.62" y="153.5" width="1" height="1.2" fill="#8a8a8a"/><rect x="669.29" y="153.5" width="1" height="1.2" fill="#8a8a8a"/><rect x="674.96" y="152.5" width="1" height="2.5" fill="#7a7a7a"/><rect x="680.63" y="153.5" width="1" height="1.2" fill="#8a8a8a"/><rect x="686.30" y="153.5" width="1" height="1.2" fill="#8a8a8a"/><rect x="691.98" y="153.5" width="1" height="1.2" fill="#8a8a8a"/><rect x="697.65" y="153.5" width="1" height="1.2" fill="#8a8a8a"/><rect x="703.32" y="150" width="1" height="5" fill="#585858"/><rect x="708.99" y="153.5" width="1" height="1.2" fill="#8a8a8a"/><rect x="714.66" y="153.5" width="1" height="1.2" fill="#8a8a8a"/><rect x="720.34" y="153.5" width="1" height="1.2" fill="#8a8a8a"/><rect x="726.01" y="153.5" width="1" height="1.2" fill="#8a8a8a"/><rect x="731.68" y="152.5" width="1" height="2.5" fill="#7a7a7a"/><rect x="737.35" y="153.5" width="1" height="1.2" fill="#8a8a8a"/><rect x="743.02" y="153.5" width="1" height="1.2" fill="#8a8a8a"/><rect x="748.70" y="153.5" width="1" height="1.2" fill="#8a8a8a"/><rect x="754.37" y="153.5" width="1" height="1.2" fill="#8a8a8a"/><rect x="760.04" y="150" width="1" height="5" fill="#585858"/><rect x="765.71" y="153.5" width="1" height="1.2" fill="#8a8a8a"/><rect x="771.38" y="153.5" width="1" height="1.2" fill="#8a8a8a"/><rect x="777.06" y="153.5" width="1" height="1.2" fill="#8a8a8a"/><rect x="782.73" y="153.5" width="1" height="1.2" fill="#8a8a8a"/><rect x="788.40" y="152.5" width="1" height="2.5" fill="#7a7a7a"/><rect x="794.07" y="153.5" width="1" height="1.2" fill="#8a8a8a"/><rect x="799.74" y="153.5" width="1" height="1.2" fill="#8a8a8a"/><rect x="805.42" y="153.5" width="1" height="1.2" fill="#8a8a8a"/><rect x="811.09" y="153.5" width="1" height="1.2" fill="#8a8a8a"/><rect x="816.76" y="150" width="1" height="5" fill="#585858"/><rect x="822.43" y="153.5" width="1" height="1.2" fill="#8a8a8a"/><rect x="828.10" y="153.5" width="1" height="1.2" fill="#8a8a8a"/><rect x="833.78" y="153.5" width="1" height="1.2" fill="#8a8a8a"/><rect x="839.45" y="153.5" width="1" height="1.2" fill="#8a8a8a"/><rect x="845.12" y="152.5" width="1" height="2.5" fill="#7a7a7a"/><rect x="850.79" y="153.5" width="1" height="1.2" fill="#8a8a8a"/><rect x="856.46" y="153.5" width="1" height="1.2" fill="#8a8a8a"/><rect x="862.14" y="153.5" width="1" height="1.2" fill="#8a8a8a"/><rect x="867.81" y="153.5" width="1" height="1.2" fill="#8a8a8a"/><rect x="873.48" y="150" width="1" height="5" fill="#585858"/><rect x="879.15" y="153.5" width="1" height="1.2" fill="#8a8a8a"/><rect x="884.82" y="153.5" width="1" height="1.2" fill="#8a8a8a"/><rect x="890.50" y="153.5" width="1" height="1.2" fill="#8a8a8a"/><rect x="896.17" y="153.5" width="1" height="1.2" fill="#8a8a8a"/><rect x="901.84" y="152.5" width="1" height="2.5" fill="#7a7a7a"/><rect x="907.51" y="153.5" width="1" height="1.2" fill="#8a8a8a"/><rect x="913.18" y="153.5" width="1" height="1.2" fill="#8a8a8a"/><rect x="918.86" y="153.5" width="1" height="1.2" fill="#8a8a8a"/><rect x="924.53" y="153.5" width="1" height="1.2" fill="#8a8a8a"/><rect x="930.20" y="150" width="1" height="5" fill="#585858"/><rect x="935.87" y="153.5" width="1" height="1.2" fill="#8a8a8a"/><rect x="941.54" y="153.5" width="1" height="1.2" fill="#8a8a8a"/><rect x="947.22" y="153.5" width="1" height="1.2" fill="#8a8a8a"/><rect x="952.89" y="153.5" width="1" height="1.2" fill="#8a8a8a"/><rect x="958.56" y="152.5" width="1" height="2.5" fill="#7a7a7a"/><rect x="964.23" y="153.5" width="1" height="1.2" fill="#8a8a8a"/><rect x="969.90" y="153.5" width="1" height="1.2" fill="#8a8a8a"/><rect x="975.58" y="153.5" width="1" height="1.2" fill="#8a8a8a"/><rect x="981.25" y="153.5" width="1" height="1.2" fill="#8a8a8a"/><rect x="986.92" y="150" width="1" height="5" fill="#585858"/><rect x="992.59" y="153.5" width="1" height="1.2" fill="#8a8a8a"/><rect x="998.26" y="153.5" width="1" height="1.2" fill="#8a8a8a"/><rect x="1003.94" y="153.5" width="1" height="1.2" fill="#8a8a8a"/><rect x="1009.61" y="153.5" width="1" height="1.2" fill="#8a8a8a"/><rect x="1015.28" y="152.5" width="1" height="2.5" fill="#7a7a7a"/><rect x="1020.95" y="153.5" width="1" height="1.2" fill="#8a8a8a"/><rect x="1026.62" y="153.5" width="1" height="1.2" fill="#8a8a8a"/><rect x="1032.30" y="153.5" width="1" height="1.2" fill="#8a8a8a"/><rect x="1037.97" y="153.5" width="1" height="1.2" fill="#8a8a8a"/><rect x="1043.64" y="150" width="1" height="5" fill="#585858"/><rect x="1049.31" y="153.5" width="1" height="1.2" fill="#8a8a8a"/><rect x="1054.98" y="153.5" width="1" height="1.2" fill="#8a8a8a"/><rect x="1060.66" y="153.5" width="1" height="1.2" fill="#8a8a8a"/><rect x="1066.33" y="153.5" width="1" height="1.2" fill="#8a8a8a"/><rect x="1072.00" y="152.5" width="1" height="2.5" fill="#7a7a7a"/><rect x="1077.67" y="153.5" width="1" height="1.2" fill="#8a8a8a"/><rect x="1083.34" y="153.5" width="1" height="1.2" fill="#8a8a8a"/><rect x="1089.02" y="153.5" width="1" height="1.2" fill="#8a8a8a"/><rect x="1094.69" y="153.5" width="1" height="1.2" fill="#8a8a8a"/><rect x="1100.36" y="150" width="1" height="5" fill="#585858"/><rect x="1106.03" y="153.5" width="1" height="1.2" fill="#8a8a8a"/><rect x="1111.70" y="153.5" width="1" height="1.2" fill="#8a8a8a"/><rect x="1117.38" y="153.5" width="1" height="1.2" fill="#8a8a8a"/><rect x="1123.05" y="153.5" width="1" height="1.2" fill="#8a8a8a"/><rect x="1128.72" y="152.5" width="1" height="2.5" fill="#7a7a7a"/><rect x="1134.39" y="153.5" width="1" height="1.2" fill="#8a8a8a"/><rect x="1140.06" y="153.5" width="1" height="1.2" fill="#8a8a8a"/><rect x="1145.74" y="153.5" width="1" height="1.2" fill="#8a8a8a"/><rect x="1151.41" y="153.5" width="1" height="1.2" fill="#8a8a8a"/><rect x="1157.08" y="150" width="1" height="5" fill="#585858"/><rect x="1162.75" y="153.5" width="1" height="1.2" fill="#8a8a8a"/><rect x="1168.42" y="153.5" width="1" height="1.2" fill="#8a8a8a"/><rect x="1174.10" y="153.5" width="1" height="1.2" fill="#8a8a8a"/><rect x="1179.77" y="153.5" width="1" height="1.2" fill="#8a8a8a"/><rect x="1185.44" y="152.5" width="1" height="2.5" fill="#7a7a7a"/><rect x="1191.11" y="153.5" width="1" height="1.2" fill="#8a8a8a"/><rect x="1196.78" y="153.5" width="1" height="1.2" fill="#8a8a8a"/><rect x="1202.46" y="153.5" width="1" height="1.2" fill="#8a8a8a"/><rect x="1208.13" y="153.5" width="1" height="1.2" fill="#8a8a8a"/><rect x="1213.80" y="150" width="1" height="5" fill="#585858"/><rect x="1219.47" y="153.5" width="1" height="1.2" fill="#8a8a8a"/><rect x="1225.14" y="153.5" width="1" height="1.2" fill="#8a8a8a"/><rect x="1230.82" y="153.5" width="1" height="1.2" fill="#8a8a8a"/><rect x="1236.49" y="153.5" width="1" height="1.2" fill="#8a8a8a"/><rect x="1242.16" y="152.5" width="1" height="2.5" fill="#7a7a7a"/><rect x="1247.83" y="153.5" width="1" height="1.2" fill="#8a8a8a"/><rect x="1253.50" y="153.5" width="1" height="1.2" fill="#8a8a8a"/><rect x="1259.18" y="153.5" width="1" height="1.2" fill="#8a8a8a"/><rect x="1264.85" y="153.5" width="1" height="1.2" fill="#8a8a8a"/><rect x="1270.52" y="150" width="1" height="5" fill="#585858"/><rect x="1276.19" y="153.5" width="1" height="1.2" fill="#8a8a8a"/><rect x="1281.86" y="153.5" width="1" height="1.2" fill="#8a8a8a"/><rect x="1287.54" y="153.5" width="1" height="1.2" fill="#8a8a8a"/><rect x="1293.21" y="153.5" width="1" height="1.2" fill="#8a8a8a"/><rect x="1298.88" y="152.5" width="1" height="2.5" fill="#7a7a7a"/><rect x="1304.55" y="153.5" width="1" height="1.2" fill="#8a8a8a"/><rect x="1310.22" y="153.5" width="1" height="1.2" fill="#8a8a8a"/><rect x="1315.90" y="153.5" width="1" height="1.2" fill="#8a8a8a"/><rect x="1321.57" y="153.5" width="1" height="1.2" fill="#8a8a8a"/><rect x="1327.24" y="150" width="1" height="5" fill="#585858"/><rect x="1332.91" y="153.5" width="1" height="1.2" fill="#8a8a8a"/><rect x="1338.58" y="153.5" width="1" height="1.2" fill="#8a8a8a"/><rect x="1344.26" y="153.5" width="1" height="1.2" fill="#8a8a8a"/><rect x="1349.93" y="153.5" width="1" height="1.2" fill="#8a8a8a"/><rect x="1355.60" y="152.5" width="1" height="2.5" fill="#7a7a7a"/><rect x="1361.27" y="153.5" width="1" height="1.2" fill="#8a8a8a"/><rect x="1366.94" y="153.5" width="1" height="1.2" fill="#8a8a8a"/><rect x="1372.62" y="153.5" width="1" height="1.2" fill="#8a8a8a"/><rect x="1378.29" y="153.5" width="1" height="1.2" fill="#8a8a8a"/><rect x="1383.96" y="150" width="1" height="5" fill="#585858"/><rect x="1389.63" y="153.5" width="1" height="1.2" fill="#8a8a8a"/><rect x="1395.30" y="153.5" width="1" height="1.2" fill="#8a8a8a"/><rect x="1400.98" y="153.5" width="1" height="1.2" fill="#8a8a8a"/><rect x="1406.65" y="153.5" width="1" height="1.2" fill="#8a8a8a"/><rect x="1412.32" y="152.5" width="1" height="2.5" fill="#7a7a7a"/><rect x="1417.99" y="153.5" width="1" height="1.2" fill="#8a8a8a"/><rect x="1423.66" y="153.5" width="1" height="1.2" fill="#8a8a8a"/><rect x="1429.34" y="153.5" width="1" height="1.2" fill="#8a8a8a"/><rect x="1435.01" y="153.5" width="1" height="1.2" fill="#8a8a8a"/><rect x="1440.68" y="150" width="1" height="5" fill="#585858"/><rect x="1446.35" y="153.5" width="1" height="1.2" fill="#8a8a8a"/><rect x="1452.02" y="153.5" width="1" height="1.2" fill="#8a8a8a"/><rect x="1457.70" y="153.5" width="1" height="1.2" fill="#8a8a8a"/><rect x="1463.37" y="153.5" width="1" height="1.2" fill="#8a8a8a"/><rect x="1469.04" y="152.5" width="1" height="2.5" fill="#7a7a7a"/><rect x="1474.71" y="153.5" width="1" height="1.2" fill="#8a8a8a"/><rect x="1480.38" y="153.5" width="1" height="1.2" fill="#8a8a8a"/><rect x="1486.06" y="153.5" width="1" height="1.2" fill="#8a8a8a"/><rect x="1491.73" y="153.5" width="1" height="1.2" fill="#8a8a8a"/><rect x="1497.40" y="150" width="1" height="5" fill="#585858"/><rect x="1503.07" y="153.5" width="1" height="1.2" fill="#8a8a8a"/><rect x="1508.74" y="153.5" width="1" height="1.2" fill="#8a8a8a"/><rect x="1514.42" y="153.5" width="1" height="1.2" fill="#8a8a8a"/><rect x="1520.09" y="153.5" width="1" height="1.2" fill="#8a8a8a"/><rect x="1525.76" y="152.5" width="1" height="2.5" fill="#7a7a7a"/><rect x="1531.43" y="153.5" width="1" height="1.2" fill="#8a8a8a"/><rect x="1537.10" y="153.5" width="1" height="1.2" fill="#8a8a8a"/><rect x="1542.78" y="153.5" width="1" height="1.2" fill="#8a8a8a"/><rect x="1548.45" y="153.5" width="1" height="1.2" fill="#8a8a8a"/><rect x="1554.12" y="150" width="1" height="5" fill="#585858"/><rect x="1559.79" y="153.5" width="1" height="1.2" fill="#8a8a8a"/></svg>
<div class="a" style="left:59.9px;top:140px;width:40px;text-align:center;font-size:10px;line-height:11px;color:#8e8e8e">10</div>
<div class="a" style="left:116.6px;top:140px;width:40px;text-align:center;font-size:10px;line-height:11px;color:#8e8e8e">8</div>
<div class="a" style="left:173.3px;top:140px;width:40px;text-align:center;font-size:10px;line-height:11px;color:#8e8e8e">6</div>
<div class="a" style="left:230.1px;top:140px;width:40px;text-align:center;font-size:10px;line-height:11px;color:#8e8e8e">4</div>
<div class="a" style="left:286.8px;top:140px;width:40px;text-align:center;font-size:10px;line-height:11px;color:#8e8e8e">2</div>
<div class="a" style="left:343.5px;top:140px;width:40px;text-align:center;font-size:10px;line-height:11px;color:#8e8e8e">0</div>
<div class="a" style="left:400.2px;top:140px;width:40px;text-align:center;font-size:10px;line-height:11px;color:#8e8e8e">2</div>
<div class="a" style="left:456.9px;top:140px;width:40px;text-align:center;font-size:10px;line-height:11px;color:#8e8e8e">4</div>
<div class="a" style="left:513.7px;top:140px;width:40px;text-align:center;font-size:10px;line-height:11px;color:#8e8e8e">6</div>
<div class="a" style="left:570.4px;top:140px;width:40px;text-align:center;font-size:10px;line-height:11px;color:#8e8e8e">8</div>
<div class="a" style="left:627.1px;top:140px;width:40px;text-align:center;font-size:10px;line-height:11px;color:#8e8e8e">10</div>
<div class="a" style="left:683.8px;top:140px;width:40px;text-align:center;font-size:10px;line-height:11px;color:#8e8e8e">12</div>
<div class="a" style="left:740.5px;top:140px;width:40px;text-align:center;font-size:10px;line-height:11px;color:#8e8e8e">14</div>
<div class="a" style="left:797.3px;top:140px;width:40px;text-align:center;font-size:10px;line-height:11px;color:#8e8e8e">16</div>
<div class="a" style="left:854.0px;top:140px;width:40px;text-align:center;font-size:10px;line-height:11px;color:#8e8e8e">18</div>
<div class="a" style="left:910.7px;top:140px;width:40px;text-align:center;font-size:10px;line-height:11px;color:#8e8e8e">20</div>
<div class="a" style="left:967.4px;top:140px;width:40px;text-align:center;font-size:10px;line-height:11px;color:#8e8e8e">22</div>
<div class="a" style="left:1024.1px;top:140px;width:40px;text-align:center;font-size:10px;line-height:11px;color:#8e8e8e">24</div>
<div class="a" style="left:1080.9px;top:140px;width:40px;text-align:center;font-size:10px;line-height:11px;color:#8e8e8e">26</div>
<div class="a" style="left:1137.6px;top:140px;width:40px;text-align:center;font-size:10px;line-height:11px;color:#8e8e8e">28</div>
<div class="a" style="left:1194.3px;top:140px;width:40px;text-align:center;font-size:10px;line-height:11px;color:#8e8e8e">30</div>
<div class="a" style="left:1251.0px;top:140px;width:40px;text-align:center;font-size:10px;line-height:11px;color:#8e8e8e">32</div>
<div class="a" style="left:1307.7px;top:140px;width:40px;text-align:center;font-size:10px;line-height:11px;color:#8e8e8e">34</div>
<div class="a" style="left:1364.5px;top:140px;width:40px;text-align:center;font-size:10px;line-height:11px;color:#8e8e8e">36</div>
<div class="a" style="left:1421.2px;top:140px;width:40px;text-align:center;font-size:10px;line-height:11px;color:#8e8e8e">38</div>
<div class="a" style="left:1477.9px;top:140px;width:40px;text-align:center;font-size:10px;line-height:11px;color:#8e8e8e">40</div>
<div class="a" style="left:1515px;top:140px;font-size:10px;line-height:11px;color:#8e8e8e">Zentimeter</div>
<div class="a" style="left:1541px;top:140px;width:1px;height:3px;background:#111"></div>
<div class="a" style="left:1541px;top:152px;width:1px;height:4px;background:#111"></div>
<div class="a" style="left:50px;top:156px;width:1515px;height:1px;background:#e3e3e3"></div>
<svg style="left:36px;top:144px;" width="11" height="11" viewBox="0 0 11 11"><path d="M1.5 1.5L10 10" stroke="#333" stroke-width="1.3"/><path d="M10.5 10.5L7 9.5L9.5 7Z" fill="#333"/><path d="M1 1H9M1 1V9" stroke="#888" stroke-width="0.8" stroke-dasharray="1 1"/></svg>
<svg style="left:0;top:0" width="1920" height="1080" viewBox="0 0 1920 1080"><rect x="46.5" y="158.88" width="1.2" height="1" fill="#8a8a8a"/><rect x="46.5" y="164.56" width="1.2" height="1" fill="#8a8a8a"/><rect x="46.5" y="170.23" width="1.2" height="1" fill="#8a8a8a"/><rect x="45.5" y="175.90" width="2.5" height="1" fill="#7a7a7a"/><rect x="46.5" y="181.57" width="1.2" height="1" fill="#8a8a8a"/><rect x="46.5" y="187.24" width="1.2" height="1" fill="#8a8a8a"/><rect x="46.5" y="192.92" width="1.2" height="1" fill="#8a8a8a"/><rect x="46.5" y="198.59" width="1.2" height="1" fill="#8a8a8a"/><rect x="43" y="204.26" width="5" height="1" fill="#585858"/><rect x="46.5" y="209.93" width="1.2" height="1" fill="#8a8a8a"/><rect x="46.5" y="215.60" width="1.2" height="1" fill="#8a8a8a"/><rect x="46.5" y="221.28" width="1.2" height="1" fill="#8a8a8a"/><rect x="46.5" y="226.95" width="1.2" height="1" fill="#8a8a8a"/><rect x="45.5" y="232.62" width="2.5" height="1" fill="#7a7a7a"/><rect x="46.5" y="238.29" width="1.2" height="1" fill="#8a8a8a"/><rect x="46.5" y="243.96" width="1.2" height="1" fill="#8a8a8a"/><rect x="46.5" y="249.64" width="1.2" height="1" fill="#8a8a8a"/><rect x="46.5" y="255.31" width="1.2" height="1" fill="#8a8a8a"/><rect x="43" y="260.98" width="5" height="1" fill="#585858"/><rect x="46.5" y="266.65" width="1.2" height="1" fill="#8a8a8a"/><rect x="46.5" y="272.32" width="1.2" height="1" fill="#8a8a8a"/><rect x="46.5" y="278.00" width="1.2" height="1" fill="#8a8a8a"/><rect x="46.5" y="283.67" width="1.2" height="1" fill="#8a8a8a"/><rect x="45.5" y="289.34" width="2.5" height="1" fill="#7a7a7a"/><rect x="46.5" y="295.01" width="1.2" height="1" fill="#8a8a8a"/><rect x="46.5" y="300.68" width="1.2" height="1" fill="#8a8a8a"/><rect x="46.5" y="306.36" width="1.2" height="1" fill="#8a8a8a"/><rect x="46.5" y="312.03" width="1.2" height="1" fill="#8a8a8a"/><rect x="43" y="317.70" width="5" height="1" fill="#585858"/><rect x="46.5" y="323.37" width="1.2" height="1" fill="#8a8a8a"/><rect x="46.5" y="329.04" width="1.2" height="1" fill="#8a8a8a"/><rect x="46.5" y="334.72" width="1.2" height="1" fill="#8a8a8a"/><rect x="46.5" y="340.39" width="1.2" height="1" fill="#8a8a8a"/><rect x="45.5" y="346.06" width="2.5" height="1" fill="#7a7a7a"/><rect x="46.5" y="351.73" width="1.2" height="1" fill="#8a8a8a"/><rect x="46.5" y="357.40" width="1.2" height="1" fill="#8a8a8a"/><rect x="46.5" y="363.08" width="1.2" height="1" fill="#8a8a8a"/><rect x="46.5" y="368.75" width="1.2" height="1" fill="#8a8a8a"/><rect x="43" y="374.42" width="5" height="1" fill="#585858"/><rect x="46.5" y="380.09" width="1.2" height="1" fill="#8a8a8a"/><rect x="46.5" y="385.76" width="1.2" height="1" fill="#8a8a8a"/><rect x="46.5" y="391.44" width="1.2" height="1" fill="#8a8a8a"/><rect x="46.5" y="397.11" width="1.2" height="1" fill="#8a8a8a"/><rect x="45.5" y="402.78" width="2.5" height="1" fill="#7a7a7a"/><rect x="46.5" y="408.45" width="1.2" height="1" fill="#8a8a8a"/><rect x="46.5" y="414.12" width="1.2" height="1" fill="#8a8a8a"/><rect x="46.5" y="419.80" width="1.2" height="1" fill="#8a8a8a"/><rect x="46.5" y="425.47" width="1.2" height="1" fill="#8a8a8a"/><rect x="43" y="431.14" width="5" height="1" fill="#585858"/><rect x="46.5" y="436.81" width="1.2" height="1" fill="#8a8a8a"/><rect x="46.5" y="442.48" width="1.2" height="1" fill="#8a8a8a"/><rect x="46.5" y="448.16" width="1.2" height="1" fill="#8a8a8a"/><rect x="46.5" y="453.83" width="1.2" height="1" fill="#8a8a8a"/><rect x="45.5" y="459.50" width="2.5" height="1" fill="#7a7a7a"/><rect x="46.5" y="465.17" width="1.2" height="1" fill="#8a8a8a"/><rect x="46.5" y="470.84" width="1.2" height="1" fill="#8a8a8a"/><rect x="46.5" y="476.52" width="1.2" height="1" fill="#8a8a8a"/><rect x="46.5" y="482.19" width="1.2" height="1" fill="#8a8a8a"/><rect x="43" y="487.86" width="5" height="1" fill="#585858"/><rect x="46.5" y="493.53" width="1.2" height="1" fill="#8a8a8a"/><rect x="46.5" y="499.20" width="1.2" height="1" fill="#8a8a8a"/><rect x="46.5" y="504.88" width="1.2" height="1" fill="#8a8a8a"/><rect x="46.5" y="510.55" width="1.2" height="1" fill="#8a8a8a"/><rect x="45.5" y="516.22" width="2.5" height="1" fill="#7a7a7a"/><rect x="46.5" y="521.89" width="1.2" height="1" fill="#8a8a8a"/><rect x="46.5" y="527.56" width="1.2" height="1" fill="#8a8a8a"/><rect x="46.5" y="533.24" width="1.2" height="1" fill="#8a8a8a"/><rect x="46.5" y="538.91" width="1.2" height="1" fill="#8a8a8a"/><rect x="43" y="544.58" width="5" height="1" fill="#585858"/><rect x="46.5" y="550.25" width="1.2" height="1" fill="#8a8a8a"/><rect x="46.5" y="555.92" width="1.2" height="1" fill="#8a8a8a"/><rect x="46.5" y="561.60" width="1.2" height="1" fill="#8a8a8a"/><rect x="46.5" y="567.27" width="1.2" height="1" fill="#8a8a8a"/><rect x="45.5" y="572.94" width="2.5" height="1" fill="#7a7a7a"/><rect x="46.5" y="578.61" width="1.2" height="1" fill="#8a8a8a"/><rect x="46.5" y="584.28" width="1.2" height="1" fill="#8a8a8a"/><rect x="46.5" y="589.96" width="1.2" height="1" fill="#8a8a8a"/><rect x="46.5" y="595.63" width="1.2" height="1" fill="#8a8a8a"/><rect x="43" y="601.30" width="5" height="1" fill="#585858"/><rect x="46.5" y="606.97" width="1.2" height="1" fill="#8a8a8a"/><rect x="46.5" y="612.64" width="1.2" height="1" fill="#8a8a8a"/><rect x="46.5" y="618.32" width="1.2" height="1" fill="#8a8a8a"/><rect x="46.5" y="623.99" width="1.2" height="1" fill="#8a8a8a"/><rect x="45.5" y="629.66" width="2.5" height="1" fill="#7a7a7a"/><rect x="46.5" y="635.33" width="1.2" height="1" fill="#8a8a8a"/><rect x="46.5" y="641.00" width="1.2" height="1" fill="#8a8a8a"/><rect x="46.5" y="646.68" width="1.2" height="1" fill="#8a8a8a"/><rect x="46.5" y="652.35" width="1.2" height="1" fill="#8a8a8a"/><rect x="43" y="658.02" width="5" height="1" fill="#585858"/><rect x="46.5" y="663.69" width="1.2" height="1" fill="#8a8a8a"/><rect x="46.5" y="669.36" width="1.2" height="1" fill="#8a8a8a"/><rect x="46.5" y="675.04" width="1.2" height="1" fill="#8a8a8a"/><rect x="46.5" y="680.71" width="1.2" height="1" fill="#8a8a8a"/><rect x="45.5" y="686.38" width="2.5" height="1" fill="#7a7a7a"/><rect x="46.5" y="692.05" width="1.2" height="1" fill="#8a8a8a"/><rect x="46.5" y="697.72" width="1.2" height="1" fill="#8a8a8a"/><rect x="46.5" y="703.40" width="1.2" height="1" fill="#8a8a8a"/><rect x="46.5" y="709.07" width="1.2" height="1" fill="#8a8a8a"/><rect x="43" y="714.74" width="5" height="1" fill="#585858"/><rect x="46.5" y="720.41" width="1.2" height="1" fill="#8a8a8a"/><rect x="46.5" y="726.08" width="1.2" height="1" fill="#8a8a8a"/><rect x="46.5" y="731.76" width="1.2" height="1" fill="#8a8a8a"/><rect x="46.5" y="737.43" width="1.2" height="1" fill="#8a8a8a"/><rect x="45.5" y="743.10" width="2.5" height="1" fill="#7a7a7a"/><rect x="46.5" y="748.77" width="1.2" height="1" fill="#8a8a8a"/><rect x="46.5" y="754.44" width="1.2" height="1" fill="#8a8a8a"/><rect x="46.5" y="760.12" width="1.2" height="1" fill="#8a8a8a"/><rect x="46.5" y="765.79" width="1.2" height="1" fill="#8a8a8a"/><rect x="43" y="771.46" width="5" height="1" fill="#585858"/><rect x="46.5" y="777.13" width="1.2" height="1" fill="#8a8a8a"/><rect x="46.5" y="782.80" width="1.2" height="1" fill="#8a8a8a"/><rect x="46.5" y="788.48" width="1.2" height="1" fill="#8a8a8a"/><rect x="46.5" y="794.15" width="1.2" height="1" fill="#8a8a8a"/><rect x="45.5" y="799.82" width="2.5" height="1" fill="#7a7a7a"/><rect x="46.5" y="805.49" width="1.2" height="1" fill="#8a8a8a"/><rect x="46.5" y="811.16" width="1.2" height="1" fill="#8a8a8a"/><rect x="46.5" y="816.84" width="1.2" height="1" fill="#8a8a8a"/><rect x="46.5" y="822.51" width="1.2" height="1" fill="#8a8a8a"/><rect x="43" y="828.18" width="5" height="1" fill="#585858"/><rect x="46.5" y="833.85" width="1.2" height="1" fill="#8a8a8a"/><rect x="46.5" y="839.52" width="1.2" height="1" fill="#8a8a8a"/><rect x="46.5" y="845.20" width="1.2" height="1" fill="#8a8a8a"/><rect x="46.5" y="850.87" width="1.2" height="1" fill="#8a8a8a"/><rect x="45.5" y="856.54" width="2.5" height="1" fill="#7a7a7a"/><rect x="46.5" y="862.21" width="1.2" height="1" fill="#8a8a8a"/><rect x="46.5" y="867.88" width="1.2" height="1" fill="#8a8a8a"/><rect x="46.5" y="873.56" width="1.2" height="1" fill="#8a8a8a"/><rect x="46.5" y="879.23" width="1.2" height="1" fill="#8a8a8a"/><rect x="43" y="884.90" width="5" height="1" fill="#585858"/><rect x="46.5" y="890.57" width="1.2" height="1" fill="#8a8a8a"/><rect x="46.5" y="896.24" width="1.2" height="1" fill="#8a8a8a"/><rect x="46.5" y="901.92" width="1.2" height="1" fill="#8a8a8a"/><rect x="46.5" y="907.59" width="1.2" height="1" fill="#8a8a8a"/><rect x="45.5" y="913.26" width="2.5" height="1" fill="#7a7a7a"/><rect x="46.5" y="918.93" width="1.2" height="1" fill="#8a8a8a"/><rect x="46.5" y="924.60" width="1.2" height="1" fill="#8a8a8a"/><rect x="46.5" y="930.28" width="1.2" height="1" fill="#8a8a8a"/><rect x="46.5" y="935.95" width="1.2" height="1" fill="#8a8a8a"/><rect x="43" y="941.62" width="5" height="1" fill="#585858"/><rect x="46.5" y="947.29" width="1.2" height="1" fill="#8a8a8a"/><rect x="46.5" y="952.96" width="1.2" height="1" fill="#8a8a8a"/><rect x="46.5" y="958.64" width="1.2" height="1" fill="#8a8a8a"/><rect x="46.5" y="964.31" width="1.2" height="1" fill="#8a8a8a"/><rect x="45.5" y="969.98" width="2.5" height="1" fill="#7a7a7a"/><rect x="46.5" y="975.65" width="1.2" height="1" fill="#8a8a8a"/></svg>
<div class="a" style="left:19.5px;top:197.3px;width:40px;text-align:center;font-size:10px;line-height:11px;color:#8e8e8e;transform:rotate(-90deg)">34</div>
<div class="a" style="left:19.5px;top:254.0px;width:40px;text-align:center;font-size:10px;line-height:11px;color:#8e8e8e;transform:rotate(-90deg)">32</div>
<div class="a" style="left:19.5px;top:310.7px;width:40px;text-align:center;font-size:10px;line-height:11px;color:#8e8e8e;transform:rotate(-90deg)">30</div>
<div class="a" style="left:19.5px;top:367.4px;width:40px;text-align:center;font-size:10px;line-height:11px;color:#8e8e8e;transform:rotate(-90deg)">28</div>
<div class="a" style="left:19.5px;top:424.1px;width:40px;text-align:center;font-size:10px;line-height:11px;color:#8e8e8e;transform:rotate(-90deg)">26</div>
<div class="a" style="left:19.5px;top:480.9px;width:40px;text-align:center;font-size:10px;line-height:11px;color:#8e8e8e;transform:rotate(-90deg)">24</div>
<div class="a" style="left:19.5px;top:537.6px;width:40px;text-align:center;font-size:10px;line-height:11px;color:#8e8e8e;transform:rotate(-90deg)">22</div>
<div class="a" style="left:19.5px;top:594.3px;width:40px;text-align:center;font-size:10px;line-height:11px;color:#8e8e8e;transform:rotate(-90deg)">20</div>
<div class="a" style="left:19.5px;top:651.0px;width:40px;text-align:center;font-size:10px;line-height:11px;color:#8e8e8e;transform:rotate(-90deg)">18</div>
<div class="a" style="left:19.5px;top:707.7px;width:40px;text-align:center;font-size:10px;line-height:11px;color:#8e8e8e;transform:rotate(-90deg)">16</div>
<div class="a" style="left:19.5px;top:764.5px;width:40px;text-align:center;font-size:10px;line-height:11px;color:#8e8e8e;transform:rotate(-90deg)">14</div>
<div class="a" style="left:19.5px;top:821.2px;width:40px;text-align:center;font-size:10px;line-height:11px;color:#8e8e8e;transform:rotate(-90deg)">12</div>
<div class="a" style="left:19.5px;top:877.9px;width:40px;text-align:center;font-size:10px;line-height:11px;color:#8e8e8e;transform:rotate(-90deg)">10</div>
<div class="a" style="left:49px;top:157px;width:1px;height:824px;background:#e0e0e0"></div>
<div class="a" style="left:31px;top:117px;width:1px;height:886px;background:#d2d2d2"></div>
<div class="a" style="left:33px;top:318px;width:3px;height:1.5px;background:#111"></div>
<div class="a" style="left:45px;top:318px;width:3px;height:1.5px;background:#111"></div>
<div class="a" style="left:4px;top:122px;width:24px;height:24px;background:#fff;border:1px solid #a9a9a9"></div>
<svg style="left:13px;top:129px;" width="9" height="14" viewBox="0 0 9 14"><path d="M0.5 0.5V11L3.2 8.6L5.6 13.5L7.6 12.6L5.2 7.8H8.8Z" fill="#262626"/></svg>
<svg style="left:23px;top:141px;" width="4" height="4" viewBox="0 0 4 4"><path d="M4 0V4H0Z" fill="#6e6e6e"/></svg>
<svg style="left:8px;top:155px;" width="17" height="19" viewBox="0 0 17 19"><path d="M3.5 0.5C2 3 2.5 6 3.5 8M4 11C5 14 7 16.5 9 18" fill="none" stroke="#262626" stroke-width="1.1"/><rect x="2" y="5.5" width="3.5" height="3.5" fill="#fff" stroke="#262626" stroke-width="1"/><path d="M10 10L15.5 12.5L12 16Z" fill="#262626"/></svg>
<svg style="left:23px;top:170px;" width="4" height="4" viewBox="0 0 4 4"><path d="M4 0V4H0Z" fill="#6e6e6e"/></svg>
<div class="a" style="left:5px;top:181px;width:22px;height:1px;background:#d8d8d8"></div>
<svg style="left:8px;top:192px;" width="16" height="16" viewBox="0 0 16 16"><path d="M4.5 0V11.5H16M0 4.5H11.5V16" fill="none" stroke="#1e1e1e" stroke-width="2"/></svg>
<svg style="left:23px;top:204px;" width="4" height="4" viewBox="0 0 4 4"><path d="M4 0V4H0Z" fill="#6e6e6e"/></svg>
<svg style="left:8px;top:221px;" width="16" height="16" viewBox="0 0 16 16"><path d="M3.5 8V3.5Q3.5 2 4.8 2Q6 2 6 3.5V8M6 7V2Q6 0.6 7.3 0.6Q8.6 0.6 8.6 2V7.5M8.6 7V2.2Q8.6 1 9.9 1Q11.2 1 11.2 2.2V8M11.2 7.5V3.5Q11.2 2.4 12.4 2.4Q13.6 2.4 13.6 3.5V10Q13.6 15.4 8.3 15.4Q4.5 15.4 2.5 12.5L0.7 9.5Q0.3 8.4 1.3 8Q2.3 7.8 3 8.8L3.5 9.8" fill="none" stroke="#262626" stroke-width="1.2"/></svg>
<svg style="left:23px;top:233px;" width="4" height="4" viewBox="0 0 4 4"><path d="M4 0V4H0Z" fill="#6e6e6e"/></svg>
<div class="a" style="left:5px;top:246px;width:22px;height:1px;background:#d8d8d8"></div>
<svg style="left:8px;top:258px;" width="16" height="16" viewBox="0 0 16 16"><path d="M1.5 14.5L14.5 1.5" stroke="#262626" stroke-width="1.2"/><rect x="0" y="12.5" width="3.5" height="3.5" fill="#262626"/><rect x="12.5" y="0" width="3.5" height="3.5" fill="#262626"/><rect x="6.3" y="6.3" width="3.4" height="3.4" fill="#fff" stroke="#262626" stroke-width="1.1"/></svg>
<svg style="left:23px;top:270px;" width="4" height="4" viewBox="0 0 4 4"><path d="M4 0V4H0Z" fill="#6e6e6e"/></svg>
<svg style="left:8px;top:288px;" width="16" height="17" viewBox="0 0 16 17"><path d="M1 4Q1 0.8 4.2 0.8Q7.4 0.8 7 5Q6.5 9.5 7.5 12.5Q9.5 15.8 12.5 14.5Q15 13 14 10.5Q13 8.5 10.5 9" fill="none" stroke="#262626" stroke-width="1.3"/><path d="M7.8 13Q10 16.2 13 14.8" fill="none" stroke="#262626" stroke-width="2"/></svg>
<svg style="left:23px;top:301px;" width="4" height="4" viewBox="0 0 4 4"><path d="M4 0V4H0Z" fill="#6e6e6e"/></svg>
<svg style="left:8px;top:316px;" width="16" height="16" viewBox="0 0 16 16"><rect x="0.6" y="0.6" width="14.8" height="14.8" fill="none" stroke="#262626" stroke-width="1.2"/></svg>
<svg style="left:23px;top:328px;" width="4" height="4" viewBox="0 0 4 4"><path d="M4 0V4H0Z" fill="#6e6e6e"/></svg>
<svg style="left:8px;top:345px;" width="16" height="16" viewBox="0 0 16 16"><circle cx="8" cy="8" r="7.4" fill="none" stroke="#262626" stroke-width="1.2"/></svg>
<svg style="left:23px;top:357px;" width="4" height="4" viewBox="0 0 4 4"><path d="M4 0V4H0Z" fill="#6e6e6e"/></svg>
<svg style="left:8px;top:374px;" width="16" height="16" viewBox="0 0 16 16"><path d="M4 1H12L15.5 8L12 15H4L0.5 8Z" fill="none" stroke="#262626" stroke-width="1.2"/></svg>
<svg style="left:23px;top:386px;" width="4" height="4" viewBox="0 0 4 4"><path d="M4 0V4H0Z" fill="#6e6e6e"/></svg>
<div class="a" style="left:5px;top:400px;width:22px;height:1px;background:#d8d8d8"></div>
<svg style="left:8px;top:411px;" width="16" height="16" viewBox="0 0 16 16"><path d="M1 16L8 0.8L15 16M3.5 10.5H12.5" fill="none" stroke="#262626" stroke-width="1.5"/></svg>
<svg style="left:23px;top:423px;" width="4" height="4" viewBox="0 0 4 4"><path d="M4 0V4H0Z" fill="#6e6e6e"/></svg>
<div class="a" style="left:5px;top:437px;width:22px;height:1px;background:#d8d8d8"></div>
<svg style="left:8px;top:448px;" width="16" height="16" viewBox="0 0 16 16"><path d="M2 14L14 2M0 12L4 16M12 0L16 4" fill="none" stroke="#262626" stroke-width="1.2"/></svg>
<svg style="left:23px;top:460px;" width="4" height="4" viewBox="0 0 4 4"><path d="M4 0V4H0Z" fill="#6e6e6e"/></svg>
<svg style="left:8px;top:477px;" width="16" height="17" viewBox="0 0 16 17"><path d="M2 2L14 14" stroke="#262626" stroke-width="1.2"/><rect x="0.5" y="0.5" width="3.5" height="3.5" fill="#b0735a" stroke="#3a2a20" stroke-width="0.9"/><rect x="11.5" y="11.5" width="3.8" height="3.8" fill="#b0735a" stroke="#3a2a20" stroke-width="0.9"/></svg>
<svg style="left:23px;top:490px;" width="4" height="4" viewBox="0 0 4 4"><path d="M4 0V4H0Z" fill="#6e6e6e"/></svg>
<div class="a" style="left:5px;top:503px;width:22px;height:1px;background:#d8d8d8"></div>
<svg style="left:8px;top:514px;" width="16" height="16" viewBox="0 0 16 16"><rect x="0.6" y="0.6" width="11.8" height="11.8" fill="none" stroke="#262626" stroke-width="1.2"/><path d="M15 4.5V15H4.5" fill="none" stroke="#262626" stroke-width="1.8"/></svg>
<svg style="left:23px;top:526px;" width="4" height="4" viewBox="0 0 4 4"><path d="M4 0V4H0Z" fill="#6e6e6e"/></svg>
<svg style="left:8px;top:543px;" width="16" height="16" viewBox="0 0 16 16"><rect x="0" y="0" width="16" height="16" fill="#1e1e1e"/><rect x="1.0" y="1.0" width="2.8" height="2.8" fill="#fff"/><rect x="1.0" y="6.6" width="2.8" height="2.8" fill="#fff"/><rect x="1.0" y="12.2" width="2.8" height="2.8" fill="#fff"/><rect x="3.8" y="3.8" width="2.8" height="2.8" fill="#fff"/><rect x="3.8" y="9.4" width="2.8" height="2.8" fill="#fff"/><rect x="6.6" y="1.0" width="2.8" height="2.8" fill="#fff"/><rect x="6.6" y="6.6" width="2.8" height="2.8" fill="#fff"/><rect x="6.6" y="12.2" width="2.8" height="2.8" fill="#fff"/><rect x="9.4" y="3.8" width="2.8" height="2.8" fill="#fff"/><rect x="9.4" y="9.4" width="2.8" height="2.8" fill="#fff"/><rect x="12.2" y="1.0" width="2.8" height="2.8" fill="#fff"/><rect x="12.2" y="6.6" width="2.8" height="2.8" fill="#fff"/><rect x="12.2" y="12.2" width="2.8" height="2.8" fill="#fff"/></svg>
<div class="a" style="left:5px;top:569px;width:22px;height:1px;background:#d8d8d8"></div>
<svg style="left:8px;top:580px;" width="16" height="16" viewBox="0 0 16 16"><path d="M1 15L2 12L10 4L12 6L4 14Z" fill="#b8805a" stroke="#262626" stroke-width="1"/><path d="M9 3L13 7L11 9L7 5Z M11 2L14 5L15.5 3.5Q16 2 14.5 0.5Q13 0 12 1Z" fill="#262626"/></svg>
<svg style="left:23px;top:592px;" width="4" height="4" viewBox="0 0 4 4"><path d="M4 0V4H0Z" fill="#6e6e6e"/></svg>
<svg style="left:8px;top:609px;" width="16" height="16" viewBox="0 0 16 16"><path d="M7 1L13.5 7.5L7 14L0.5 7.5Z" fill="#fff" stroke="#262626" stroke-width="1.6"/><path d="M4 8H10L7 10.5Z" fill="#c0303a"/><path d="M10 11L14 7V12Q14 14 12 14Z" fill="#c0303a"/><path d="M6 1L8 0L14 6L13 7Z" fill="#262626"/></svg>
<svg style="left:23px;top:621px;" width="4" height="4" viewBox="0 0 4 4"><path d="M4 0V4H0Z" fill="#6e6e6e"/></svg>
<div class="a" style="left:5px;top:635px;width:22px;height:1px;background:#d8d8d8"></div>
<svg style="left:10px;top:653px;" width="12" height="12" viewBox="0 0 12 12"><path d="M6 0V12M0 6H12" stroke="#b9b9b9" stroke-width="1.5"/></svg>
<div class="a" style="left:363px;top:157px;width:1px;height:807px;background:#9a9a9a"></div>
<div class="a" style="left:1497px;top:157px;width:7px;height:807px;background:#bdbdbd"></div>
<svg style="left:0px;top:0px;" width="1920" height="1080" viewBox="0 0 1920 1080"><path d="M416.5 341.5L470.5 434.5L464.5 535.5L408.5 564.5L389 489" fill="none" stroke="#1a1a1a" stroke-width="1"/></svg>
<svg style="left:0px;top:0px;" width="1920" height="1080" viewBox="0 0 1920 1080"><path d="M668 368 C690 365 720 362.5 741 362.5 C744 362.5 745 365 745 368 C745 400 747 440 754 462 C760 487 770 503 783 504 C798 505 815 492 828 472 C838 452 841 430 840 405 C839 387 838 374 838 368 C838 363 842 362 847 364 C856 369 866 373 878 373 C890 373 899 371 906 371 C910 371 911 377 911 384 C907 470 904 700 902 838 C903 841 901 842 897 841 C870 836 840 832 800 831 C760 830 720 831 690 833 C670 833 655 835 647 836 C642 836 641 833 642 828 C646 790 652 730 652 680 C652 640 651 610 651 592 C652 580 658 573 672 572 C695 571 720 572 744 573 C750 573 752 577 751 585 C750 610 744 640 742 670 C740 720 744 760 752 782 C758 798 768 805 781 805 C800 805 822 792 836 774 C850 754 853 725 853 690 C855 640 853 600 852 570 C851 550 847 535 830 534 C815 533 800 536 780 536 C740 534 700 533 672 532 C667 532 666 529 666 524 C666 470 667 410 668 368 Z" fill="#f08200" stroke="#0b4463" stroke-width="7" stroke-linejoin="round"/></svg>
<div class="a" style="left:1548px;top:157px;width:17px;height:807px;background:#fff"></div>
<div class="a" style="left:1549px;top:157px;width:16px;height:17px;background:#f0f0f0"></div>
<svg style="left:1553px;top:162px;" width="8" height="5" viewBox="0 0 8 5"><path d="M0.5 4.5L4 1L7.5 4.5" fill="none" stroke="#444" stroke-width="1.5"/></svg>
<div class="a" style="left:1549px;top:419px;width:15px;height:257px;background:#c8c8c8"></div>
<div class="a" style="left:1549px;top:947px;width:16px;height:17px;background:#f0f0f0"></div>
<svg style="left:1553px;top:953px;" width="8" height="5" viewBox="0 0 8 5"><path d="M0.5 0.5L4 4L7.5 0.5" fill="none" stroke="#444" stroke-width="1.5"/></svg>
<div class="a" style="left:1566px;top:117px;width:2px;height:886px;background:#fafafa;border-left:1px solid #d8d8d8"></div>
<div class="a" style="left:50px;top:964px;width:1516px;height:18px;background:#f2f2f2"></div>
<div class="a" style="left:50px;top:964px;width:758px;height:1px;background:#bdbdbd"></div>
<div class="a" style="left:50px;top:981px;width:1516px;height:1px;background:#d4d4d4"></div>
<svg style="left:53px;top:967px;" width="10" height="11" viewBox="0 0 10 11"><path d="M0.5 2.5V10.5H9.5V0.5H2.5Z" fill="none" stroke="#666" stroke-width="1"/><path d="M5 4V9M2.5 6.5H7.5" stroke="#666" stroke-width="1"/></svg>
<svg style="left:69px;top:968px;" width="10" height="9" viewBox="0 0 10 9"><path d="M0.8 0V9" stroke="#a9a9a9" stroke-width="1.4"/><path d="M10 0V9L3 4.5Z" fill="#a9a9a9"/></svg>
<svg style="left:86px;top:968px;" width="8" height="9" viewBox="0 0 8 9"><path d="M8 0V9L1 4.5Z" fill="#a9a9a9"/></svg>
<div class="t" style="left:103px;top:965px;color:#a9a9a9">1&nbsp; von&nbsp; 1</div>
<svg style="left:153px;top:968px;" width="8" height="9" viewBox="0 0 8 9"><path d="M0 0V9L7 4.5Z" fill="#a9a9a9"/></svg>
<svg style="left:169px;top:968px;" width="10" height="9" viewBox="0 0 10 9"><path d="M9.2 0V9" stroke="#a9a9a9" stroke-width="1.4"/><path d="M0 0V9L7 4.5Z" fill="#a9a9a9"/></svg>
<svg style="left:185px;top:967px;" width="10" height="11" viewBox="0 0 10 11"><path d="M0.5 2.5V10.5H9.5V0.5H2.5Z" fill="none" stroke="#666" stroke-width="1"/><path d="M5 4V9M2.5 6.5H7.5" stroke="#666" stroke-width="1"/></svg>
<svg style="left:200px;top:963px;" width="70" height="20" viewBox="0 0 70 20"><path d="M6 1L12 18.5H79" fill="none"/><path d="M6 0.5L12 18.5H61L66 0.5" fill="#fff" stroke="#8c8c8c" stroke-width="1"/></svg>
<div class="a" style="left:207px;top:964px;width:59px;height:1px;background:#fff"></div>
<div class="t" style="left:218px;top:965px;">Seite 1</div>
<div class="a" style="left:807px;top:964px;width:1px;height:17px;background:#8c8c8c"></div>
<div class="a" style="left:810px;top:965px;width:15px;height:16px;background:#ededed"></div>
<svg style="left:814px;top:969px;" width="6" height="8" viewBox="0 0 6 8"><path d="M5 0.5L1.2 4L5 7.5" fill="none" stroke="#333" stroke-width="1.6"/></svg>
<div class="a" style="left:825px;top:965px;width:706px;height:16px;background:#fff"></div>
<div class="a" style="left:937px;top:965px;width:412px;height:15px;background:#c8c8c8"></div>
<div class="a" style="left:1531px;top:965px;width:16px;height:16px;background:#ededed"></div>
<svg style="left:1537px;top:969px;" width="6" height="8" viewBox="0 0 6 8"><path d="M1 0.5L4.8 4L1 7.5" fill="none" stroke="#333" stroke-width="1.6"/></svg>
<svg style="left:1550px;top:966px;" width="14" height="14" viewBox="0 0 14 14"><circle cx="5.5" cy="5.5" r="4.6" fill="none" stroke="#333" stroke-width="1.1"/><path d="M9 9L13 13" stroke="#333" stroke-width="1.6"/><path d="M5.5 2.8V8.2M2.8 5.5H8.2" stroke="#333" stroke-width="0.9"/></svg>
<div class="a" style="left:31px;top:982px;width:1535px;height:20px;background:#f2f2f2"></div>
<div class="a" style="left:31px;top:981px;width:1535px;height:1px;background:#d4d4d4"></div>
<svg style="left:36px;top:984px;" width="4" height="16" viewBox="0 0 4 16"><path d="M0.5 0V16M3 1.5V16" stroke="#cfcfcf" stroke-dasharray="1 1.5"/></svg>
<svg style="left:46px;top:988px;" width="5" height="8" viewBox="0 0 5 8"><path d="M0 0V8L4.5 4Z" fill="#444"/></svg>
<svg style="left:62px;top:984px;" width="14" height="15" viewBox="0 0 14 15"><path d="M1 14L2 11L8.5 4.5L10.5 6.5L4 13Z" fill="#b8805a" stroke="#262626" stroke-width="1"/><path d="M7.5 3.5L11.5 7.5L10 9L6 5Z M10 2L12.5 4.5L13.8 3.2Q14.2 1.8 12.8 0.6Q11.5 0.2 10.8 1Z" fill="#262626"/></svg>
<svg style="left:82px;top:987px;" width="6" height="9" viewBox="0 0 6 9"><path d="M5 0.5L1 4.5L5 8.5" fill="none" stroke="#ccc" stroke-width="1.4"/></svg>
<div class="a" style="left:96px;top:983px;width:18px;height:18px;background:#fff;border:1px solid #555"></div>
<svg style="left:97px;top:984px;" width="16" height="16" viewBox="0 0 16 16"><path d="M1.5 14.5L14.5 1.5" stroke="#c0392b" stroke-width="1"/></svg>
<div class="a" style="left:114px;top:983px;width:17px;height:18px;background:#19699a"></div>
<div class="a" style="left:131px;top:983px;width:17px;height:18px;background:#0c2b40"></div>
<div class="a" style="left:148px;top:983px;width:17px;height:18px;background:#0b4a6e"></div>
<div class="a" style="left:130px;top:983px;width:1px;height:18px;background:#0a2233"></div>
<div class="a" style="left:147px;top:983px;width:1px;height:18px;background:#0a2233"></div>
<svg style="left:1527px;top:986px;" width="9" height="10" viewBox="0 0 9 10"><path d="M1 0.5L6 5L1 9.5" fill="none" stroke="#c8c8c8" stroke-width="1.4"/></svg>
<svg style="left:1543px;top:987px;" width="9" height="9" viewBox="0 0 9 9"><path d="M0.5 0.5L4 4.5L0.5 8.5M4.5 0.5L8 4.5L4.5 8.5" fill="none" stroke="#c8c8c8" stroke-width="1.1"/></svg>
<div class="a" style="left:31px;top:981px;width:1px;height:22px;background:#d2d2d2"></div>
<div class="a" style="left:1568px;top:117px;width:310px;height:884px;background:#fff"></div>
<div class="a" style="left:1568px;top:117px;width:310px;height:23px;background:#ebebeb"></div>
<div class="t" style="left:1576px;top:122px;">Objekte</div>
<svg style="left:1863px;top:124px;" width="10" height="9" viewBox="0 0 10 9"><path d="M0.5 0.5L4.5 4.5L0.5 8.5Z M5 0.5L9 4.5L5 8.5Z" fill="#b0b0b0"/></svg>
<svg style="left:1883px;top:124px;" width="9" height="9" viewBox="0 0 9 9"><path d="M0.5 0.5L8.5 8.5M8.5 0.5L0.5 8.5" stroke="#b0b0b0" stroke-width="1.4"/></svg>
<div class="a" style="left:1568px;top:140px;width:310px;height:36px;background:#f2f2f2"></div>
<div class="a" style="left:1568px;top:140px;width:310px;height:1px;background:#d0d0d0"></div>
<div class="a" style="left:1571px;top:148px;width:305px;height:24px;background:#fff;border:1px solid #b9b9b9"></div>
<div class="t" style="left:1575px;top:153px;color:#707070">Suche</div>
<div class="a" style="left:1568px;top:176px;width:310px;height:30px;background:#f2f2f2"></div>
<div class="a" style="left:1571px;top:177px;width:24px;height:24px;background:#fafafa;border:1px solid #c3c3c3"></div>
<svg style="left:1575px;top:181px;" width="16" height="16" viewBox="0 0 16 16"><path d="M3.5 0.6H12.4V4.5M3.5 0.6L0.6 3.5V15.4H6" fill="none" stroke="#262626" stroke-width="1.2"/><path d="M0.6 3.8L3.8 0.6V3.8Z" fill="#262626"/><path d="M6.5 12.5L10.5 10L14.5 12.5L10.5 15.5Z" fill="#262626"/><path d="M10.5 5.5L14 8L10.5 10.5L7 8Z" fill="#fff" stroke="#262626" stroke-width="1.1"/></svg>
<svg style="left:1604px;top:181px;" width="17" height="17" viewBox="0 0 17 17"><g transform="scale(1.0)"><path d="M0.5 10.8L8 6.3L15.5 10.8L8 15.6Z" fill="#262626"/><path d="M8 0.8L15.2 4.8L8 8.8L0.8 4.8Z" fill="#fff" stroke="#262626" stroke-width="1.3" stroke-linejoin="round"/></g></svg>
<svg style="left:1634px;top:181px;" width="14" height="16" viewBox="0 0 14 16"><path d="M3.5 0.6H12.4V15.4H0.6V3.5Z" fill="none" stroke="#262626" stroke-width="1.2"/><path d="M0.6 3.8L3.8 0.6V3.8Z" fill="#262626"/></svg>
<div class="t" style="left:1658px;top:182px;"><b>Seite 1</b></div>
<div class="t" style="left:1710px;top:182px;">Ebene 1</div>
<svg style="left:1855px;top:179px;" width="20" height="20" viewBox="0 0 20 20"><path d="M15.15 9.81 L16.62 10.69 L15.58 13.19 L13.92 12.77 L12.77 13.92 L13.19 15.58 L10.69 16.62 L9.81 15.15 L8.19 15.15 L7.31 16.62 L4.81 15.58 L5.23 13.92 L4.08 12.77 L2.42 13.19 L1.38 10.69 L2.85 9.81 L2.85 8.19 L1.38 7.31 L2.42 4.81 L4.08 5.23 L5.23 4.08 L4.81 2.42 L7.31 1.38 L8.19 2.85 L9.81 2.85 L10.69 1.38 L13.19 2.42 L12.77 4.08 L13.92 5.23 L15.58 4.81 L16.62 7.31 L15.15 8.19Z M12.70 9.00 A3.7 3.7 0 1 0 5.30 9.00 A3.7 3.7 0 1 0 12.70 9.00Z" fill="#262626" stroke="#262626" stroke-width="1.2" stroke-linejoin="round" fill-rule="evenodd"/><path d="M20 16V20H16Z" fill="#666"/></svg>
<div class="a" style="left:1568px;top:206px;width:310px;height:24px;background:#f0f0f0"></div>
<div class="a" style="left:1568px;top:230px;width:310px;height:1px;background:#dcdcdc"></div>
<svg style="left:1579px;top:214px;" width="9" height="7" viewBox="0 0 9 7"><path d="M0 0H9L4.5 7Z" fill="#262626"/></svg>
<div class="t" style="left:1602px;top:212px;"><b>Seite 1</b></div>
<svg style="left:1595px;top:236px;" width="14" height="15" viewBox="0 0 14 15"><path d="M0 5H13M4 0V15" stroke="#333" stroke-width="1" stroke-dasharray="1.1 1.1"/><circle cx="4" cy="5" r="1.3" fill="#fff" stroke="#333" stroke-width="0.9"/></svg>
<div class="t" style="left:1629px;top:238px;">Hilfslinien</div>
<svg style="left:1848px;top:237px;" width="13" height="13" viewBox="0 0 13 13"><path d="M3.5 6V1.5L5 0.5H9.5V6" fill="none" stroke="#333" stroke-width="1"/><path d="M0.5 6.5H12.5V12.5H0.5Z" fill="none" stroke="#333" stroke-width="1"/><path d="M0.5 0.5L12 12" stroke="#333" stroke-width="0.9"/></svg>
<div class="a" style="left:1867px;top:235px;width:5px;height:18px;background:#1212c8;border-radius:3px"></div>
<div class="a" style="left:1568px;top:257px;width:310px;height:1px;background:#e2e2e2"></div>
<svg style="left:1579px;top:266px;" width="9" height="7" viewBox="0 0 9 7"><path d="M0 0H9L4.5 7Z" fill="#262626"/></svg>
<svg style="left:1596px;top:265px;" width="17" height="17" viewBox="0 0 17 17"><g transform="scale(0.75)"><path d="M0.5 10.8L8 6.3L15.5 10.8L8 15.6Z" fill="#262626"/><path d="M8 0.8L15.2 4.8L8 8.8L0.8 4.8Z" fill="#fff" stroke="#262626" stroke-width="1.3" stroke-linejoin="round"/></g></svg>
<div class="t" style="left:1629px;top:264px;"><b>Ebene 1</b></div>
<div class="a" style="left:1867px;top:261px;width:5px;height:18px;background:#111;border-radius:3px"></div>
<svg style="left:1607px;top:288px;" width="9" height="18" viewBox="0 0 9 18"><path d="M3 0.5L6.5 5.5L6 12.5L2.5 16.5L1 11" fill="none" stroke="#d0d0d0" stroke-width="1.1"/></svg>
<div class="t" style="left:1638px;top:290px;">Kurve</div>
<svg style="left:1605px;top:313px;" width="13" height="18" viewBox="0 0 13 18"><path d="M0.5 0.5H5V8C5 10 8 10 8 8V0.5H12.5V17.5H0.5Z" fill="#c9873f"/><path d="M4 10H8V16H4Z" fill="#fff" opacity="0.8"/></svg>
<div class="t" style="left:1638px;top:316px;">Kurve</div>
<div class="a" style="left:1568px;top:335px;width:310px;height:1px;background:#dcdcdc"></div>
<div class="a" style="left:1568px;top:336px;width:310px;height:24px;background:#f0f0f0"></div>
<div class="a" style="left:1568px;top:360px;width:310px;height:1px;background:#dcdcdc"></div>
<svg style="left:1579px;top:344px;" width="9" height="7" viewBox="0 0 9 7"><path d="M0 0H9L4.5 7Z" fill="#262626"/></svg>
<div class="t" style="left:1602px;top:342px;"><b>Master-Seite</b></div>
<svg style="left:1595px;top:366px;" width="14" height="15" viewBox="0 0 14 15"><path d="M0 5H13M4 0V15" stroke="#333" stroke-width="1" stroke-dasharray="1.1 1.1"/><circle cx="4" cy="5" r="1.3" fill="#fff" stroke="#333" stroke-width="0.9"/></svg>
<div class="t" style="left:1629px;top:368px;">Hilfslinien (alle Seiten)</div>
<svg style="left:1848px;top:367px;" width="13" height="13" viewBox="0 0 13 13"><path d="M3.5 6V1.5L5 0.5H9.5V6" fill="none" stroke="#333" stroke-width="1"/><path d="M0.5 6.5H12.5V12.5H0.5Z" fill="none" stroke="#333" stroke-width="1"/><path d="M0.5 0.5L12 12" stroke="#333" stroke-width="0.9"/></svg>
<div class="a" style="left:1867px;top:365px;width:5px;height:18px;background:#1212c8;border-radius:3px"></div>
<div class="a" style="left:1568px;top:386px;width:310px;height:1px;background:#e2e2e2"></div>
<svg style="left:1579px;top:397px;" width="9" height="7" viewBox="0 0 9 7"><path d="M0 0H9L4.5 7Z" fill="#262626"/></svg>
<svg style="left:1596px;top:394px;" width="13" height="13" viewBox="0 0 13 13"><rect x="1.5" y="1.5" width="10" height="10" fill="none" stroke="#262626" stroke-width="1"/><rect x="3.5" y="3.5" width="6" height="6" fill="#262626"/><path d="M0 0H3V3H0Z M10 0H13V3H10Z M0 10H3V13H0Z M10 10H13V13H10Z" fill="#262626"/></svg>
<div class="t" style="left:1629px;top:394px;">Desktop</div>
<svg style="left:1816px;top:395px;" width="13" height="11" viewBox="0 0 13 11"><path d="M0.5 5.5Q6.5 -1 12.5 5.5Q6.5 12 0.5 5.5Z" fill="none" stroke="#333" stroke-width="1"/><circle cx="6.5" cy="5.5" r="2.2" fill="#333"/><path d="M1 0L12 11" stroke="#333" stroke-width="0.9"/></svg>
<svg style="left:1833px;top:394px;" width="10" height="13" viewBox="0 0 10 13"><path d="M2.5 6V3.5Q2.5 0.7 5 0.7Q7.5 0.7 7.5 3.5V6" fill="none" stroke="#262626" stroke-width="1.2"/><rect x="0.5" y="6" width="9" height="7" fill="#262626"/></svg>
<svg style="left:1848px;top:394px;" width="13" height="13" viewBox="0 0 13 13"><path d="M3.5 6V1.5L5 0.5H9.5V6" fill="none" stroke="#333" stroke-width="1"/><path d="M0.5 6.5H12.5V12.5H0.5Z" fill="none" stroke="#333" stroke-width="1"/><path d="M0.5 0.5L12 12" stroke="#333" stroke-width="0.9"/></svg>
<div class="a" style="left:1867px;top:391px;width:5px;height:18px;background:#111;border-radius:3px"></div>
<svg style="left:1605px;top:419px;" width="12" height="15" viewBox="0 0 12 15"><rect x="0" y="0" width="12" height="15" fill="#b9b9b9"/><rect x="2" y="3" width="8" height="9" fill="#a5a5a5"/></svg>
<div class="t" style="left:1638px;top:420px;color:#bdbdbd">Bitmap</div>
<div class="a" style="left:1568px;top:439px;width:310px;height:1px;background:#e2e2e2"></div>
<svg style="left:1596px;top:446px;" width="12" height="12" viewBox="0 0 12 12"><path d="M3.5 0V12M8.5 0V12M0 3.5H12M0 8.5H12" stroke="#333" stroke-width="1"/></svg>
<div class="t" style="left:1629px;top:446px;">Dokumentgitter</div>
<svg style="left:1816px;top:447px;" width="13" height="11" viewBox="0 0 13 11"><path d="M0.5 5.5Q6.5 -1 12.5 5.5Q6.5 12 0.5 5.5Z" fill="none" stroke="#333" stroke-width="1"/><circle cx="6.5" cy="5.5" r="2.2" fill="#333"/><path d="M1 0L12 11" stroke="#333" stroke-width="0.9"/></svg>
<svg style="left:1833px;top:446px;" width="10" height="13" viewBox="0 0 10 13"><path d="M2.5 6V3.5Q2.5 0.7 5 0.7Q7.5 0.7 7.5 3.5V6" fill="none" stroke="#c8c8c8" stroke-width="1.2"/><rect x="0.5" y="6" width="9" height="7" fill="#c8c8c8"/></svg>
<svg style="left:1848px;top:446px;" width="13" height="13" viewBox="0 0 13 13"><path d="M3.5 6V1.5L5 0.5H9.5V6" fill="none" stroke="#c8c8c8" stroke-width="1"/><path d="M0.5 6.5H12.5V12.5H0.5Z" fill="none" stroke="#c8c8c8" stroke-width="1"/><path d="M0.5 0.5L12 12" stroke="#c8c8c8" stroke-width="0.9"/></svg>
<div class="a" style="left:1867px;top:443px;width:5px;height:18px;background:#c8c8c8;border-radius:3px"></div>
<div class="a" style="left:1569px;top:976px;width:304px;height:25px;background:#f0f0f0"></div>
<svg style="left:1575px;top:980px;" width="17" height="17" viewBox="0 0 17 17"><path d="M1 8.5L8.5 4L16 8.5L8.5 13Z" fill="#262626"/><path d="M8 1L1 5.5" stroke="#262626" stroke-width="1.1"/><rect x="9" y="0" width="7" height="7" fill="#1f8f3a"/><path d="M12.5 1.2V5.8M10.2 3.5H14.8" stroke="#fff" stroke-width="1.3"/></svg>
<svg style="left:1604px;top:980px;" width="18" height="18" viewBox="0 0 18 18"><path d="M1 5.5L7 2M1 9L8.5 13.5L14 10M1 12.5L8.5 17L14 13.5" fill="none" stroke="#262626" stroke-width="1.1"/><path d="M1 9L7 5.5" stroke="#262626" stroke-width="1.1"/><rect x="9" y="0" width="7" height="7" fill="#1f8f3a"/><path d="M12.5 1.2V5.8M10.2 3.5H14.8" stroke="#fff" stroke-width="1.3"/><path d="M18 15V18H15Z" fill="#666"/></svg>
<svg style="left:1634px;top:981px;" width="14" height="16" viewBox="0 0 14 16"><path d="M0 2.5H14M4.5 2.5V0.5H9.5V2.5" fill="none" stroke="#b5b5b5" stroke-width="1.3"/><path d="M1.5 4H12.5L11.5 16H2.5Z" fill="#b5b5b5"/><path d="M5 6V14M9 6V14" stroke="#f0f0f0" stroke-width="1"/></svg>
<div class="a" style="left:1757px;top:988px;width:116px;height:1px;background:#9a9a9a"></div>
<div class="a" style="left:1757px;top:990px;width:116px;height:1px;background:#d0d0d0"></div>
<div class="a" style="left:1757px;top:982px;width:1px;height:12px;background:#9a9a9a"></div>
<div class="a" style="left:1872px;top:982px;width:1px;height:12px;background:#9a9a9a"></div>
<div class="a" style="left:1814px;top:983px;width:1px;height:10px;background:#9a9a9a"></div>
<div class="a" style="left:1789px;top:981px;width:6px;height:15px;background:#e6e6e6;border:1px solid #9a9a9a"></div>
<div class="a" style="left:1878px;top:117px;width:21px;height:24px;background:#ebebeb"></div>
<svg style="left:1883px;top:124px;" width="9" height="9" viewBox="0 0 9 9"><path d="M0.5 0.5L8.5 8.5M8.5 0.5L0.5 8.5" stroke="#b0b0b0" stroke-width="1.4"/></svg>
<div class="a" style="left:1878px;top:141px;width:21px;height:862px;background:#ececec"></div>
<div class="a" style="left:1878px;top:141px;width:1px;height:862px;background:#3fa9c9"></div>
<div class="a" style="left:1879px;top:141px;width:20px;height:91px;background:#cde3f6"></div>
<svg style="left:1881px;top:145px;" width="17" height="17" viewBox="0 0 17 17"><g transform="scale(0.9)"><path d="M0.5 10.8L8 6.3L15.5 10.8L8 15.6Z" fill="#262626"/><path d="M8 0.8L15.2 4.8L8 8.8L0.8 4.8Z" fill="#fff" stroke="#262626" stroke-width="1.3" stroke-linejoin="round"/></g></svg>
<div class="a" style="left:1897px;top:166px;width:70px;height:14px;line-height:14px;font-size:12px;color:#1a1a1a;transform-origin:0 0;transform:rotate(90deg);white-space:nowrap">Objekte</div>
<div class="a" style="left:1879px;top:232px;width:20px;height:123px;background:#dcdcdc"></div>
<svg style="left:1880px;top:237px;" width="16" height="14" viewBox="0 0 16 14"><path d="M5 0.8L9.5 5.3L5 9.8L0.5 5.3Z" fill="#fff" stroke="#262626" stroke-width="1.3"/><path d="M7 9L10 12M12 6V12M14.5 6V12" stroke="#262626" stroke-width="1.2"/></svg>
<div class="a" style="left:1897px;top:258px;width:95px;height:14px;line-height:14px;font-size:12px;color:#1a1a1a;transform-origin:0 0;transform:rotate(90deg);white-space:nowrap">Eigenschaften</div>
<svg style="left:1883px;top:361px;" width="12" height="12" viewBox="0 0 12 12"><path d="M6 0V12M0 6H12" stroke="#c3c3c3" stroke-width="1.5"/></svg>
<div class="a" style="left:1899px;top:117px;width:21px;height:886px;background:#f2f2f2"></div>
<div class="a" style="left:1899px;top:117px;width:2px;height:886px;background:#fafafa"></div>
<svg style="left:1901px;top:119px;" width="17" height="4" viewBox="0 0 17 4"><path d="M0 0.5H17M0 3H17" stroke="#cfcfcf" stroke-dasharray="1 1.5"/></svg>
<svg style="left:1906px;top:131px;" width="5" height="8" viewBox="0 0 5 8"><path d="M0 0V8L4.5 4Z" fill="#555"/></svg>
<svg style="left:1902px;top:148px;" width="14" height="15" viewBox="0 0 14 15"><path d="M1 14L2 11L8.5 4.5L10.5 6.5L4 13Z" fill="#b8805a" stroke="#262626" stroke-width="1"/><path d="M7.5 3.5L11.5 7.5L10 9L6 5Z M10 2L12.5 4.5L13.8 3.2Q14.2 1.8 12.8 0.6Q11.5 0.2 10.8 1Z" fill="#262626"/></svg>
<svg style="left:1905px;top:170px;" width="9" height="5" viewBox="0 0 9 5"><path d="M0.5 4.5L4.5 0.7L8.5 4.5" fill="none" stroke="#c8c8c8" stroke-width="1.3"/></svg>
<div class="a" style="left:1901px;top:182px;width:18px;height:17px;background:#fff;border:1px solid #555"></div>
<svg style="left:1901px;top:183px;" width="17" height="15" viewBox="0 0 17 15"><path d="M1.5 14L15.5 1" stroke="#c0392b" stroke-width="1"/></svg>
<div class="a" style="left:1901px;top:199px;width:18px;height:17px;background:#1a1a1a"></div>
<div class="a" style="left:1901px;top:199px;width:18px;height:1px;background:rgba(40,40,40,0.45)"></div>
<div class="a" style="left:1901px;top:216px;width:18px;height:17px;background:#333333"></div>
<div class="a" style="left:1901px;top:216px;width:18px;height:1px;background:rgba(40,40,40,0.45)"></div>
<div class="a" style="left:1901px;top:233px;width:18px;height:17px;background:#4d4d4d"></div>
<div class="a" style="left:1901px;top:233px;width:18px;height:1px;background:rgba(40,40,40,0.45)"></div>
<div class="a" style="left:1901px;top:250px;width:18px;height:17px;background:#5f5f5f"></div>
<div class="a" style="left:1901px;top:250px;width:18px;height:1px;background:rgba(40,40,40,0.45)"></div>
<div class="a" style="left:1901px;top:267px;width:18px;height:17px;background:#808080"></div>
<div class="a" style="left:1901px;top:267px;width:18px;height:1px;background:rgba(40,40,40,0.45)"></div>
<div class="a" style="left:1901px;top:284px;width:18px;height:17px;background:#999999"></div>
<div class="a" style="left:1901px;top:284px;width:18px;height:1px;background:rgba(40,40,40,0.45)"></div>
<div class="a" style="left:1901px;top:301px;width:18px;height:17px;background:#b3b3b3"></div>
<div class="a" style="left:1901px;top:301px;width:18px;height:1px;background:rgba(40,40,40,0.45)"></div>
<div class="a" style="left:1901px;top:318px;width:18px;height:17px;background:#c8c8c8"></div>
<div class="a" style="left:1901px;top:318px;width:18px;height:1px;background:rgba(40,40,40,0.45)"></div>
<div class="a" style="left:1901px;top:335px;width:18px;height:17px;background:#d9d9d9"></div>
<div class="a" style="left:1901px;top:335px;width:18px;height:1px;background:rgba(40,40,40,0.45)"></div>
<div class="a" style="left:1901px;top:352px;width:18px;height:17px;background:#e6e6e6"></div>
<div class="a" style="left:1901px;top:352px;width:18px;height:1px;background:rgba(40,40,40,0.45)"></div>
<div class="a" style="left:1901px;top:369px;width:18px;height:17px;background:#ffffff"></div>
<div class="a" style="left:1901px;top:369px;width:18px;height:1px;background:rgba(40,40,40,0.45)"></div>
<div class="a" style="left:1901px;top:386px;width:18px;height:17px;background:#2e3192"></div>
<div class="a" style="left:1901px;top:386px;width:18px;height:1px;background:rgba(40,40,40,0.45)"></div>
<div class="a" style="left:1901px;top:403px;width:18px;height:17px;background:#1ba1e2"></div>
<div class="a" style="left:1901px;top:403px;width:18px;height:1px;background:rgba(40,40,40,0.45)"></div>
<div class="a" style="left:1901px;top:420px;width:18px;height:17px;background:#00a651"></div>
<div class="a" style="left:1901px;top:420px;width:18px;height:1px;background:rgba(40,40,40,0.45)"></div>
<div class="a" style="left:1901px;top:437px;width:18px;height:17px;background:#ffe000"></div>
<div class="a" style="left:1901px;top:437px;width:18px;height:1px;background:rgba(40,40,40,0.45)"></div>
<div class="a" style="left:1901px;top:454px;width:18px;height:17px;background:#e22d24"></div>
<div class="a" style="left:1901px;top:454px;width:18px;height:1px;background:rgba(40,40,40,0.45)"></div>
<div class="a" style="left:1901px;top:471px;width:18px;height:17px;background:#e4007f"></div>
<div class="a" style="left:1901px;top:471px;width:18px;height:1px;background:rgba(40,40,40,0.45)"></div>
<div class="a" style="left:1901px;top:488px;width:18px;height:17px;background:#a8479b"></div>
<div class="a" style="left:1901px;top:488px;width:18px;height:1px;background:rgba(40,40,40,0.45)"></div>
<div class="a" style="left:1901px;top:505px;width:18px;height:17px;background:#f57f0e"></div>
<div class="a" style="left:1901px;top:505px;width:18px;height:1px;background:rgba(40,40,40,0.45)"></div>
<div class="a" style="left:1901px;top:522px;width:18px;height:17px;background:#f9b9bc"></div>
<div class="a" style="left:1901px;top:522px;width:18px;height:1px;background:rgba(40,40,40,0.45)"></div>
<div class="a" style="left:1901px;top:539px;width:18px;height:17px;background:#7d6a64"></div>
<div class="a" style="left:1901px;top:539px;width:18px;height:1px;background:rgba(40,40,40,0.45)"></div>
<div class="a" style="left:1901px;top:556px;width:18px;height:17px;background:#d9d3f0"></div>
<div class="a" style="left:1901px;top:556px;width:18px;height:1px;background:rgba(40,40,40,0.45)"></div>
<div class="a" style="left:1901px;top:573px;width:18px;height:17px;background:#b3a5dc"></div>
<div class="a" style="left:1901px;top:573px;width:18px;height:1px;background:rgba(40,40,40,0.45)"></div>
<div class="a" style="left:1901px;top:590px;width:18px;height:17px;background:#7b8dd0"></div>
<div class="a" style="left:1901px;top:590px;width:18px;height:1px;background:rgba(40,40,40,0.45)"></div>
<div class="a" style="left:1901px;top:607px;width:18px;height:17px;background:#8c73c8"></div>
<div class="a" style="left:1901px;top:607px;width:18px;height:1px;background:rgba(40,40,40,0.45)"></div>
<div class="a" style="left:1901px;top:624px;width:18px;height:17px;background:#9287b5"></div>
<div class="a" style="left:1901px;top:624px;width:18px;height:1px;background:rgba(40,40,40,0.45)"></div>
<div class="a" style="left:1901px;top:641px;width:18px;height:17px;background:#52608f"></div>
<div class="a" style="left:1901px;top:641px;width:18px;height:1px;background:rgba(40,40,40,0.45)"></div>
<div class="a" style="left:1901px;top:658px;width:18px;height:17px;background:#4f4a6b"></div>
<div class="a" style="left:1901px;top:658px;width:18px;height:1px;background:rgba(40,40,40,0.45)"></div>
<div class="a" style="left:1901px;top:675px;width:18px;height:17px;background:#707e94"></div>
<div class="a" style="left:1901px;top:675px;width:18px;height:1px;background:rgba(40,40,40,0.45)"></div>
<div class="a" style="left:1901px;top:692px;width:18px;height:17px;background:#0d97d9"></div>
<div class="a" style="left:1901px;top:692px;width:18px;height:1px;background:rgba(40,40,40,0.45)"></div>
<div class="a" style="left:1901px;top:709px;width:18px;height:17px;background:#b2d8ef"></div>
<div class="a" style="left:1901px;top:709px;width:18px;height:1px;background:rgba(40,40,40,0.45)"></div>
<div class="a" style="left:1901px;top:726px;width:18px;height:17px;background:#bfcbd6"></div>
<div class="a" style="left:1901px;top:726px;width:18px;height:1px;background:rgba(40,40,40,0.45)"></div>
<div class="a" style="left:1901px;top:743px;width:18px;height:17px;background:#8e9ba3"></div>
<div class="a" style="left:1901px;top:743px;width:18px;height:1px;background:rgba(40,40,40,0.45)"></div>
<div class="a" style="left:1901px;top:760px;width:18px;height:17px;background:#6e7880"></div>
<div class="a" style="left:1901px;top:760px;width:18px;height:1px;background:rgba(40,40,40,0.45)"></div>
<div class="a" style="left:1901px;top:777px;width:18px;height:17px;background:#3b4647"></div>
<div class="a" style="left:1901px;top:777px;width:18px;height:1px;background:rgba(40,40,40,0.45)"></div>
<div class="a" style="left:1901px;top:794px;width:18px;height:17px;background:#4e6a66"></div>
<div class="a" style="left:1901px;top:794px;width:18px;height:1px;background:rgba(40,40,40,0.45)"></div>
<div class="a" style="left:1901px;top:811px;width:18px;height:17px;background:#4e8677"></div>
<div class="a" style="left:1901px;top:811px;width:18px;height:1px;background:rgba(40,40,40,0.45)"></div>
<div class="a" style="left:1901px;top:828px;width:18px;height:17px;background:#76918f"></div>
<div class="a" style="left:1901px;top:828px;width:18px;height:1px;background:rgba(40,40,40,0.45)"></div>
<div class="a" style="left:1901px;top:845px;width:18px;height:17px;background:#5fa395"></div>
<div class="a" style="left:1901px;top:845px;width:18px;height:1px;background:rgba(40,40,40,0.45)"></div>
<div class="a" style="left:1901px;top:862px;width:18px;height:17px;background:#6ba67a"></div>
<div class="a" style="left:1901px;top:862px;width:18px;height:1px;background:rgba(40,40,40,0.45)"></div>
<div class="a" style="left:1901px;top:879px;width:18px;height:17px;background:#7dd2de"></div>
<div class="a" style="left:1901px;top:879px;width:18px;height:1px;background:rgba(40,40,40,0.45)"></div>
<div class="a" style="left:1901px;top:896px;width:18px;height:17px;background:#5babbd"></div>
<div class="a" style="left:1901px;top:896px;width:18px;height:1px;background:rgba(40,40,40,0.45)"></div>
<div class="a" style="left:1901px;top:913px;width:18px;height:17px;background:#b6ccbc"></div>
<div class="a" style="left:1901px;top:913px;width:18px;height:1px;background:rgba(40,40,40,0.45)"></div>
<div class="a" style="left:1901px;top:930px;width:18px;height:17px;background:#ddf3dd"></div>
<div class="a" style="left:1901px;top:930px;width:18px;height:1px;background:rgba(40,40,40,0.45)"></div>
<div class="a" style="left:1901px;top:947px;width:18px;height:14px;background:#b4ebb4"></div>
<div class="a" style="left:1901px;top:947px;width:18px;height:1px;background:rgba(40,40,40,0.45)"></div>
<div class="a" style="left:1901px;top:199px;width:1px;height:762px;background:#3c3c3c"></div>
<div class="a" style="left:1918px;top:199px;width:1px;height:762px;background:#3c3c3c"></div>
<div class="a" style="left:1901px;top:505px;width:18px;height:18px;background:#f57f0e;border:1px solid #fff2c8"></div>
<svg style="left:1905px;top:966px;" width="9" height="5" viewBox="0 0 9 5"><path d="M0.5 0.5L4.5 4.3L8.5 0.5" fill="none" stroke="#c8c8c8" stroke-width="1.3"/></svg>
<svg style="left:1905px;top:984px;" width="9" height="9" viewBox="0 0 9 9"><path d="M0.5 0.5L4 4.5L0.5 8.5M4.5 0.5L8 4.5L4.5 8.5" fill="none" stroke="#c8c8c8" stroke-width="1.1"/></svg>
<svg style="left:10px;top:1013px;" width="18" height="18" viewBox="0 0 18 18"><path d="M14.35 9.27 L15.72 10.10 L14.74 12.48 L13.18 12.09 L12.09 13.18 L12.48 14.74 L10.10 15.72 L9.27 14.35 L7.73 14.35 L6.90 15.72 L4.52 14.74 L4.91 13.18 L3.82 12.09 L2.26 12.48 L1.28 10.10 L2.65 9.27 L2.65 7.73 L1.28 6.90 L2.26 4.52 L3.82 4.91 L4.91 3.82 L4.52 2.26 L6.90 1.28 L7.73 2.65 L9.27 2.65 L10.10 1.28 L12.48 2.26 L12.09 3.82 L13.18 4.91 L14.74 4.52 L15.72 6.90 L14.35 7.73Z M11.90 8.50 A3.4 3.4 0 1 0 5.10 8.50 A3.4 3.4 0 1 0 11.90 8.50Z" fill="#333" stroke="#333" stroke-width="1.1" stroke-linejoin="round" fill-rule="evenodd"/><path d="M18 14V18H14Z" fill="#666"/></svg>
<div class="t" style="left:36px;top:1015px;">1. Klick=Ziehen/Skalieren; 2. Klick=Drehen/Skalieren; Dpl-klick auf Hilfsmittel markiert alles; Umschalt+Klick markiert mehrf; Alt+Klick markiert hinteres Obj</div>
<svg style="left:1433px;top:1012px;" width="16" height="17" viewBox="0 0 16 17"><path d="M6.5 1L13 7.5L6.5 14L0 7.5Z" fill="#fff" stroke="#333" stroke-width="1.6"/><path d="M3.5 8H9.5L6.5 10.5Z" fill="#c0303a"/><path d="M10 11L14 7V12Q14 14 12 14Z" fill="#c0303a"/></svg>
<div class="a" style="left:1451px;top:1011px;width:22px;height:22px;background:#fff;border:1px solid #9a9a9a"></div>
<svg style="left:1452px;top:1012px;" width="20" height="20" viewBox="0 0 20 20"><path d="M1 19L19 1" stroke="#c0392b" stroke-width="1.1"/></svg>
<div class="t" style="left:1477px;top:1014px;">Keine</div>
<svg style="left:1638px;top:1012px;" width="9" height="18" viewBox="0 0 9 18"><path d="M4.5 0.5L8 7V10H1V7Z" fill="none" stroke="#333" stroke-width="1"/><path d="M4.5 3V8" stroke="#333" stroke-width="0.9"/><rect x="1.5" y="11.5" width="6" height="5" fill="none" stroke="#333" stroke-width="1"/></svg>
<div class="a" style="left:1651px;top:1011px;width:21px;height:20px;background:#1a1a1a"></div>
<div class="t" style="left:1676px;top:1014px;letter-spacing:-0.35px">C:0 M:0 Y:0 K:100&nbsp; 0,567 pt</div>
<div class="a" style="left:1882px;top:1010px;width:1px;height:24px;background:#dcdcdc"></div>
<svg style="left:1893px;top:1013px;" width="17" height="16" viewBox="0 0 17 16"><rect x="0.5" y="0.5" width="16" height="11" fill="#fff" stroke="#333" stroke-width="1"/><rect x="1.5" y="1.5" width="14" height="4.5" fill="#d63a3a"/><rect x="1.5" y="6" width="14" height="5" fill="#3b9ad9"/><ellipse cx="8.5" cy="6" rx="3" ry="2" fill="#fff"/><circle cx="8.5" cy="6" r="1" fill="#333"/><path d="M4 14.5H13" stroke="#333" stroke-width="1.3"/></svg>
<div class="a" style="left:0px;top:1040px;width:1920px;height:40px;background:#1f1f1f"></div>
<div class="a" style="left:1400px;top:1040px;width:520px;height:40px;background:linear-gradient(90deg,#1f1f1f,#262626 30%,#272727)"></div>
<svg style="left:16px;top:1052px;" width="17" height="17" viewBox="0 0 17 17"><path d="M0 2.4L7 1.4V8H0Z M8 1.2L17 0V8H8Z M0 9H7V15.6L0 14.6Z M8 9H17V17L8 15.8Z" fill="#fff"/></svg>
<div class="a" style="left:48px;top:1040px;width:344px;height:40px;background:#f0f0f0;border:1px solid #d9d9d9"></div>
<svg style="left:59px;top:1051px;" width="18" height="18" viewBox="0 0 18 18"><circle cx="11" cy="7" r="5.6" fill="none" stroke="#222" stroke-width="1.5"/><path d="M7 11L1 17" stroke="#222" stroke-width="1.8"/></svg>
<div class="a" style="left:88px;top:1053px;font-size:14px;line-height:16px;color:#333;white-space:nowrap;transform-origin:0 0;transform:scaleX(1.04)">Zur Suche Text hier eingeben</div>
<svg style="left:314px;top:1040px;" width="78" height="40" viewBox="0 0 78 40"><path d="M17 27L19 40M29 19L31 40M44 25L42 40" stroke="#5f9a4f" stroke-width="1.8"/><path d="M19 37Q13 31 9 33Q13 38 19 37Z M31 31Q36 27 41 29Q37 34 31 31Z M42 36Q48 31 53 33Q49 38 42 36Z" fill="#6da85a"/><path d="M9 14Q8 28 16 28Q24 28 23 14Q20 11 18 13Q16 9 14 13Q11 11 9 14Z" fill="#d93a3a"/><path d="M23 6Q22 20 29 20Q36 20 35 6Q32 3 30 5Q28 1 26 5Q24 3 23 6Z" fill="#d83838"/><path d="M37 10Q36 26 44 26Q52 26 51 10Q48 7 46 9Q44 5 42 9Q39 7 37 10Z" fill="#e04040"/><path d="M12 16Q14 24 17 26" stroke="#f07070" stroke-width="1" fill="none"/><path d="M41 12Q43 21 45 24" stroke="#f07070" stroke-width="1" fill="none"/><path d="M52 0L58 2L64 6L72 9L78 12" fill="none" stroke="#c9a" stroke-width="0.8"/><path d="M52 0L54 7L59 2Z" fill="#f2b58a"/><path d="M58 3L60 12L65 6Z" fill="#7cc46a"/><path d="M65 7L66 16L71 9Z" fill="#d8304a"/><path d="M71 10L73 17L78 12Z" fill="#f0c060"/><path d="M61 21L64 23L62 27L58 25Z" fill="#d78ee8"/><circle cx="4" cy="10" r="1.6" fill="#e8c060"/><circle cx="67" cy="33" r="1.4" fill="#8cc4e8"/></svg>
<svg style="left:406px;top:1050px;" width="20" height="20" viewBox="0 0 20 20"><circle cx="10" cy="10" r="6.9" fill="none" stroke="#fff" stroke-width="1.7"/></svg>
<svg style="left:455px;top:1051px;" width="17" height="17" viewBox="0 0 17 17"><rect x="1.5" y="4.5" width="9" height="7" fill="none" stroke="#fff" stroke-width="1"/><path d="M0 1.5H2.5V3M10 3V1.5H12.5M0 15.5H2.5V14M10 14V15.5H12.5" fill="none" stroke="#fff" stroke-width="1"/><path d="M15.5 1V4M15.5 9V16" stroke="#fff" stroke-width="1"/><rect x="14.3" y="5.3" width="2.4" height="2.4" fill="#fff"/></svg>
<svg style="left:503px;top:1048px;" width="24" height="24" viewBox="0 0 24 24"><defs><linearGradient id="eg" x1="0" y1="0" x2="1" y2="1"><stop offset="0" stop-color="#3ec2a0"/><stop offset="0.5" stop-color="#1e8fd8"/><stop offset="1" stop-color="#0a4ea8"/></linearGradient></defs><circle cx="12" cy="12" r="11.5" fill="url(#eg)"/><path d="M3 8Q8 1 16 3Q22 6 23 12Q20 10 14 10Q8 11 9 16Q11 21 18 21Q13 24 7 22Q1 18 3 8Z" fill="#1a6fc8"/><path d="M15 12Q10 12 10.5 15.5Q11.5 19 16 19Q11 20 9 15Q9 11 15 12Z" fill="#0c2e5a"/><path d="M10 1Q18 0 22 7Q23 11 22 13Q17 7 10 9Q5 10 4 14Q3 5 10 1Z" fill="#5ed67a" opacity="0.8"/></svg>
<svg style="left:553px;top:1051px;" width="23" height="17" viewBox="0 0 23 17"><path d="M0 1Q0 0 1 0H8L10 2H22Q23 2 23 3V17H0Z" fill="#e8b838"/><rect x="0" y="4" width="23" height="13" fill="#f8d26a"/><path d="M6 10H17V17H14V13H9V17H6Z" fill="#3a8ed8"/></svg>
<svg style="left:601px;top:1048px;" width="24" height="23" viewBox="0 0 24 23"><path d="M0 9L12 0L24 9V23H0Z" fill="#0f5aa8"/><path d="M3 10L12 2L21 10V15H3Z" fill="#fff"/><path d="M0 9L12 17L24 9V23H0Z" fill="#2aa0e8"/><path d="M0 23L12 14L24 23Z" fill="#4ab8f0"/></svg>
<svg style="left:650px;top:1048px;" width="24" height="24" viewBox="0 0 24 24"><path d="M7 5V1.5H17V5" fill="none" stroke="#5aa0d0" stroke-width="1.6"/><rect x="0.5" y="5" width="23" height="19" rx="3" fill="#f4f4f4"/><rect x="7" y="9" width="4.5" height="4.5" fill="#e85030"/><rect x="12.5" y="9" width="4.5" height="4.5" fill="#6cc04a"/><rect x="7" y="14.5" width="4.5" height="4.5" fill="#30a0e0"/><rect x="12.5" y="14.5" width="4.5" height="4.5" fill="#f0b030"/></svg>
<svg style="left:699px;top:1048px;" width="24" height="24" viewBox="0 0 24 24"><circle cx="12" cy="12" r="11.5" fill="#1f78c8"/><path d="M1 14Q8 12 11 16Q15 12 22 12Q16 14 12 19Q8 15 1 14Z" fill="#fff"/><path d="M12 6Q14 5 15 7Q17 5 19 5Q17 6 15 8Q14 6 12 6Z" fill="#fff"/></svg>
<svg style="left:748px;top:1048px;" width="24" height="24" viewBox="0 0 24 24"><circle cx="12" cy="12" r="11.5" fill="#dd4436"/><path d="M12 12L22 6.5A11.5 11.5 0 0 1 12 23.5Z" fill="#fbc02d"/><path d="M12 12L12 23.5A11.5 11.5 0 0 1 2 6.5Z" fill="#1fa055"/><circle cx="12" cy="12" r="5.3" fill="#fff"/><circle cx="12" cy="12" r="4.1" fill="#4a8af4"/></svg>
<svg style="left:797px;top:1048px;" width="24" height="24" viewBox="0 0 24 24"><rect x="0" y="0" width="24" height="24" rx="2" fill="#2a3ab0"/><path d="M4 4H20L17 8H7Z" fill="#e0e8ff"/><path d="M5 9H19L20 19H4Z" fill="#fff"/><path d="M9 11H18L19 17H6Z" fill="#2a3ab0"/><rect x="4" y="19" width="16" height="2" fill="#fff"/></svg>
<svg style="left:848px;top:1048px;" width="20" height="24" viewBox="0 0 20 24"><path d="M13 0L20 3V21L13 24L0 19V5Z" fill="#d83b1a"/><path d="M13 0L20 3V21L13 24Z" fill="#f06a30"/><path d="M5 7L13 4V20L5 17Z" fill="#1f1f1f"/><path d="M0 19L13 24V20L5 17Z" fill="#a82a18"/></svg>
<svg style="left:895px;top:1048px;" width="24" height="24" viewBox="0 0 24 24"><circle cx="12" cy="12" r="11.5" fill="#2b9ed8"/><path d="M5 11.5L18 6.5L16 17L11.5 13.5L9.5 16V12.5L15.5 8.5L8.5 12Z" fill="#fff"/></svg>
<svg style="left:944px;top:1048px;" width="24" height="24" viewBox="0 0 24 24"><path d="M7 0.5Q10 0.5 12 1.5Q22 1 23 12Q23.5 14 22.5 16.5Q23.5 19 22 21.5Q19 24 16 22.5Q14 23.5 12 23Q2 23 1 12Q0.5 10 1.5 7.5Q0.5 5 2 2.5Q4 0.5 7 0.5Z" fill="#1ba0e0"/><path d="M16 8Q14 6 11 6.5Q7.5 7.5 8.5 10.5Q9.5 12 13 12.5Q15.5 13.5 14.5 15.5Q12 17 8 15" fill="none" stroke="#fff" stroke-width="2.6" stroke-linecap="round"/></svg>
<div class="a" style="left:981px;top:1040px;width:48px;height:40px;background:#464646"></div>
<div class="a" style="left:981px;top:1078px;width:48px;height:2px;background:#c9c2a8"></div>
<svg style="left:993px;top:1048px;" width="24" height="24" viewBox="0 0 24 24"><circle cx="12" cy="12" r="11" fill="#0e1e0c" stroke="#8fc54a" stroke-width="2"/><path d="M6 9L10 5L18 13L16 17L14 17Z" fill="#fff"/><path d="M14 17L18 19L16 15Z" fill="#fff"/></svg>
<svg style="left:1443px;top:1052px;" width="22" height="16" viewBox="0 0 22 16"><circle cx="8" cy="7" r="6" fill="#f4c84a"/><path d="M5 15Q1 15 1 12Q1 9 5 9Q7 5 12 5Q17 5 18 9Q21 9 21 12Q21 15 18 15Z" fill="#c8def0"/></svg>
<div class="a" style="left:1473px;top:1053px;font-size:14px;line-height:16px;color:#fff;white-space:nowrap;transform-origin:0 0;transform:scaleX(0.98)">12°C&nbsp; Stark bewölkt</div>
<svg style="left:1611px;top:1054px;" width="13" height="8" viewBox="0 0 13 8"><path d="M0.8 7.2L6.5 1.5L12.2 7.2" fill="none" stroke="#fff" stroke-width="1.4"/></svg>
<svg style="left:1632px;top:1051px;" width="18" height="17" viewBox="0 0 18 17"><path d="M0.5 5.5H3.5L7.5 1.5V15.5L3.5 11.5H0.5Z" fill="none" stroke="#fff" stroke-width="1.2"/><path d="M10 5Q12 8.5 10 12M12.5 3Q15.5 8.5 12.5 14M15 1Q19 8.5 15 16" fill="none" stroke="#fff" stroke-width="1.2"/></svg>
<svg style="left:1658px;top:1051px;" width="15" height="18" viewBox="0 0 15 18"><rect x="2.5" y="5" width="7" height="8" rx="1" fill="none" stroke="#fff" stroke-width="1.2"/><path d="M9.5 7L13 5V13L9.5 11Z" fill="none" stroke="#fff" stroke-width="1.2"/><path d="M1 4Q7 -2 13 4M1 14Q7 20 13 14" fill="none" stroke="#fff" stroke-width="1" stroke-dasharray="2 2"/></svg>
<svg style="left:1680px;top:1051px;" width="18" height="18" viewBox="0 0 18 18"><rect x="3.5" y="4.5" width="14" height="9" fill="none" stroke="#fff" stroke-width="1.2"/><path d="M10.5 13.5V16.5M6 16.5H15" stroke="#fff" stroke-width="1.2"/><rect x="0.5" y="0.5" width="5" height="5" fill="#1f1f1f" stroke="#fff" stroke-width="1.1"/></svg>
<div class="a" style="left:1701px;top:1040px;width:32px;height:40px;background:#333333"></div>
<svg style="left:1706px;top:1050px;" width="22" height="20" viewBox="0 0 22 20"><path d="M3 18Q1 16 3 14L14 3Q16 1 18 3Q20 5 18 7L7 18Q5 20 3 18Z" fill="none" stroke="#fff" stroke-width="1.2"/><path d="M1 19Q4 13 8 15Q12 17 15 12" fill="none" stroke="#fff" stroke-width="1.2"/></svg>
<svg style="left:1737px;top:1052px;" width="24" height="15" viewBox="0 0 24 15"><rect x="0.6" y="0.6" width="22.8" height="13.8" fill="none" stroke="#fff" stroke-width="1.2"/><path d="M3 4H21M3 7H21M6 10.5H18" stroke="#fff" stroke-width="1.1" stroke-dasharray="1.5 1"/></svg>
<div class="a" style="left:1772px;top:1053px;font-size:14px;line-height:16px;color:#fff;white-space:nowrap;transform-origin:0 0;transform:scaleX(0.78)">DEU</div>
<div class="a" style="left:1819px;top:1043px;font-size:13px;line-height:16px;color:#fff;white-space:nowrap;transform-origin:0 0;transform:scaleX(0.86)">07:02</div>
<div class="a" style="left:1808px;top:1061px;font-size:13px;line-height:16px;color:#fff;white-space:nowrap;transform-origin:0 0;transform:scaleX(0.84)">10.06.2022</div>
<svg style="left:1877px;top:1050px;" width="20" height="19" viewBox="0 0 20 19"><path d="M0.7 0.7H19.3V13.3H10L6 17.5V13.3H0.7Z" fill="none" stroke="#fff" stroke-width="1.3"/></svg>
<div class="a" style="left:1914px;top:1040px;width:1px;height:40px;background:#5a5a5a"></div>
</body></html>
